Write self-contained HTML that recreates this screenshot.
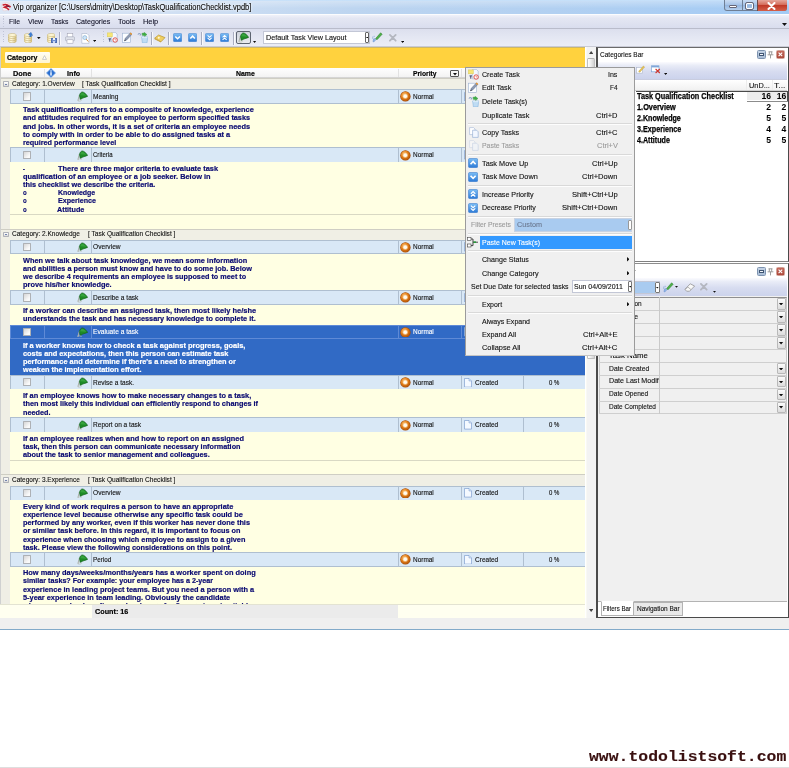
<!DOCTYPE html>
<html><head><meta charset="utf-8"><title>Vip organizer</title>
<style>
html,body{margin:0;padding:0;background:#fff;}
body{width:789px;height:768px;overflow:hidden;font-family:"Liberation Sans",sans-serif;}
#root{transform:translateZ(0);will-change:transform;position:relative;width:789px;height:768px;overflow:hidden;background:#fff;}
#root div,#root span.t,#root svg{position:absolute;box-sizing:border-box;}
span.t{white-space:pre;transform-origin:0 50%;}

</style></head><body>
<div id="root">
<div style="left:0px;top:0px;width:789px;height:13.5px;background:linear-gradient(90deg,#dbe6f5 0%,#cfdff3 25%,#bdd5f0 45%,#b2d0f1 70%,#a3cbf5 100%);"></div>
<div style="left:0px;top:0px;width:789px;height:1.4px;background:#a9d1f7;opacity:.85;"></div>
<div style="left:0px;top:0px;width:789px;height:13.5px;background:linear-gradient(180deg,rgba(255,255,255,.35),rgba(255,255,255,0) 60%);"></div>
<svg style="left:.6px;top:2px" width="10" height="9.6" viewBox="0 0 10 9.6"><path d="M.6 2.6 C2.4 .4 5.6 .2 8.4 1.6 L9.4 4.6 C8.6 7.6 5 9.4 2 8.6 Z" fill="#f7f2f4" stroke="#e3c9cf" stroke-width=".5"/><path d="M2.2 3 C4 2.2 6.4 2.6 8.6 4.4 C6.4 4.2 4.6 4.4 3.4 5.2 C5 5.6 6.6 6.2 7.6 7.4" fill="none" stroke="#c8202e" stroke-width="1.5" stroke-linecap="round"/><path d="M5 3.6 L8.8 5" stroke="#3a2a55" stroke-width=".8"/></svg>
<span class="t" id="t0" style="left:13.00px;top:2.00px;font-size:7.8px;font-weight:normal;color:#0a0a0a;line-height:10px;transform:scaleX(0.9008);-webkit-text-stroke:.12px #0a0a0a;font-size:8.3px;text-shadow:0 0 2px #fff,0 0 3px #fff;">Vip organizer [C:\Users\dmitry\Desktop\TaskQualificationChecklist.vpdb]</span>
<div style="left:724px;top:0px;width:63px;height:10.8px;border:1px solid #6f7f95;border-top:none;border-radius:0 0 3px 3px;background:linear-gradient(180deg,#c9dcf3,#a9c5e8 45%,#93b5df 50%,#b5d0ee);"></div>
<div style="left:757px;top:0px;width:29.6px;height:10.8px;border-radius:0 0 3px 0;background:linear-gradient(180deg,#e5a79c,#d46a58 45%,#c03a28 50%,#d4604a);border-left:1px solid #6f4a4a;"></div>
<div style="left:741.5px;top:0px;width:1px;height:10.3px;background:#6f7f95;"></div>
<div style="left:729px;top:5.3px;width:7.5px;height:2.5px;background:#fff;border:.5px solid #667;border-radius:1px;"></div>
<div style="left:746px;top:2.6px;width:6.5px;height:6px;border:1.3px solid #fff;outline:.5px solid #667;border-radius:1px;"></div>
<svg style="left:767px;top:1.5px" width="9" height="8" viewBox="0 0 9 8"><path d="M1.5 1 L7.5 7 M7.5 1 L1.5 7" stroke="#fff" stroke-width="2" stroke-linecap="round"/></svg>
<div style="left:0px;top:13.5px;width:789px;height:15px;background:linear-gradient(180deg,#f4f5fb 0%,#e4e7f3 30%,#d9ddee 100%);border-bottom:1px solid #b9bccb;"></div>
<div style="left:0px;top:13.5px;width:789px;height:1px;background:#fbfcfe;"></div>
<span class="t" id="t1" style="left:9.40px;top:16.70px;font-size:7.8px;font-weight:normal;color:#15152a;line-height:10px;transform:scaleX(0.8456);-webkit-text-stroke:.12px #15152a;font-size:8px;">File</span>
<span class="t" id="t2" style="left:27.90px;top:16.70px;font-size:7.8px;font-weight:normal;color:#15152a;line-height:10px;transform:scaleX(0.8836);-webkit-text-stroke:.12px #15152a;font-size:8px;">View</span>
<span class="t" id="t3" style="left:50.70px;top:16.70px;font-size:7.8px;font-weight:normal;color:#15152a;line-height:10px;transform:scaleX(0.8458);-webkit-text-stroke:.12px #15152a;font-size:8px;">Tasks</span>
<span class="t" id="t4" style="left:76.00px;top:16.70px;font-size:7.8px;font-weight:normal;color:#15152a;line-height:10px;transform:scaleX(0.8866);-webkit-text-stroke:.12px #15152a;font-size:8px;">Categories</span>
<span class="t" id="t5" style="left:117.90px;top:16.70px;font-size:7.8px;font-weight:normal;color:#15152a;line-height:10px;transform:scaleX(0.9204);-webkit-text-stroke:.12px #15152a;font-size:8px;">Tools</span>
<span class="t" id="t6" style="left:143.20px;top:16.70px;font-size:7.8px;font-weight:normal;color:#15152a;line-height:10px;transform:scaleX(0.9238);-webkit-text-stroke:.12px #15152a;font-size:8px;">Help</span>
<svg style="left:781.5px;top:22.5px" width="5" height="3" viewBox="0 0 5 3"><path d="M0 0H5L2.5 3Z" fill="#111"/></svg>
<div style="left:0px;top:28.5px;width:789px;height:18.5px;background:linear-gradient(180deg,#dcdfee 0%,#e3e6f2 40%,#eceef7 100%);"></div>
<div style="left:0px;top:46px;width:789px;height:1px;background:#c9cbd6;"></div>
<div style="left:3px;top:31px;width:1.2px;height:13px;background:repeating-linear-gradient(180deg,#bfc3d6 0 1px,transparent 1px 2.5px);"></div>
<div style="left:102.5px;top:31px;width:1.2px;height:13px;background:repeating-linear-gradient(180deg,#bfc3d6 0 1px,transparent 1px 2.5px);"></div>
<div style="left:3px;top:15.5px;width:1.2px;height:11px;background:repeating-linear-gradient(180deg,#c3c7d9 0 1px,transparent 1px 2.5px);"></div>
<svg style="left:8px;top:32.6px" width="8.6" height="10.2" viewBox="0 0 8.6 10.2"><defs><linearGradient id="cg80" x1="0" y1="0" x2="1" y2="0"><stop offset="0" stop-color="#f1dd98"/><stop offset=".35" stop-color="#fffbe2"/><stop offset="1" stop-color="#d8c27c"/></linearGradient></defs><path d="M.4 2 V8.2 A3.9 1.6 0 0 0 8.2 8.2 V2Z" fill="url(#cg80)" stroke="#bfa96c" stroke-width=".5"/><path d="M.4 4.1 A3.9 1.5 0 0 0 8.2 4.1 M.4 6.2 A3.9 1.5 0 0 0 8.2 6.2" fill="none" stroke="#c2ad70" stroke-width=".55"/><ellipse cx="4.3" cy="2" rx="3.9" ry="1.55" fill="#fdf6d4" stroke="#bfa96c" stroke-width=".5"/></svg>
<svg style="left:23.8px;top:32.6px" width="8.6" height="10.2" viewBox="0 0 8.6 10.2"><defs><linearGradient id="cg238" x1="0" y1="0" x2="1" y2="0"><stop offset="0" stop-color="#f1dd98"/><stop offset=".35" stop-color="#fffbe2"/><stop offset="1" stop-color="#d8c27c"/></linearGradient></defs><path d="M.4 2 V8.2 A3.9 1.6 0 0 0 8.2 8.2 V2Z" fill="url(#cg238)" stroke="#bfa96c" stroke-width=".5"/><path d="M.4 4.1 A3.9 1.5 0 0 0 8.2 4.1 M.4 6.2 A3.9 1.5 0 0 0 8.2 6.2" fill="none" stroke="#c2ad70" stroke-width=".55"/><ellipse cx="4.3" cy="2" rx="3.9" ry="1.55" fill="#fdf6d4" stroke="#bfa96c" stroke-width=".5"/></svg>
<svg style="left:28px;top:31.6px" width="5" height="5.4" viewBox="0 0 5 5.4"><path d="M.4 2.6 L3 .2 L4.8 3.6 L3.5 3.3 L3.2 5.2 L1.6 4.8 L1.9 2.9Z" fill="#3f7fd6" stroke="#2c5fae" stroke-width=".3"/></svg>
<svg style="left:37.4px;top:36.5px" width="3.6" height="2.2" viewBox="0 0 4 2.4"><path d="M0 0H4L2 2.4Z" fill="#111"/></svg>
<svg style="left:46.5px;top:32.6px" width="8.6" height="10.2" viewBox="0 0 8.6 10.2"><defs><linearGradient id="cg465" x1="0" y1="0" x2="1" y2="0"><stop offset="0" stop-color="#f1dd98"/><stop offset=".35" stop-color="#fffbe2"/><stop offset="1" stop-color="#d8c27c"/></linearGradient></defs><path d="M.4 2 V8.2 A3.9 1.6 0 0 0 8.2 8.2 V2Z" fill="url(#cg465)" stroke="#bfa96c" stroke-width=".5"/><path d="M.4 4.1 A3.9 1.5 0 0 0 8.2 4.1 M.4 6.2 A3.9 1.5 0 0 0 8.2 6.2" fill="none" stroke="#c2ad70" stroke-width=".55"/><ellipse cx="4.3" cy="2" rx="3.9" ry="1.55" fill="#fdf6d4" stroke="#bfa96c" stroke-width=".5"/></svg>
<div style="left:51.4px;top:37.6px;width:5.2px;height:5.2px;background:#7090d2;border:.5px solid #4f6db0;"></div>
<div style="left:52.5px;top:38px;width:2.9px;height:2.1px;background:#eef3fb;"></div>
<div style="left:52.6px;top:41px;width:2.6px;height:1.6px;background:#c9d6ef;"></div>
<div style="left:59.3px;top:31.5px;width:1px;height:13px;background:#a9adc0;"></div>
<div style="left:60.3px;top:31.5px;width:1px;height:13px;background:#f8f9fc;"></div>
<svg style="left:64.5px;top:32.5px" width="10" height="11" viewBox="0 0 10 11"><rect x="2.2" y=".6" width="5.6" height="3.5" fill="#fff" stroke="#99a" stroke-width=".5"/><rect x=".5" y="3.8" width="9" height="4" rx=".8" fill="#dfe2ea" stroke="#a2a7b8" stroke-width=".55"/><rect x="2" y="6.8" width="6" height="3.4" fill="#fff" stroke="#99a" stroke-width=".5"/></svg>
<svg style="left:80.5px;top:32.5px" width="9" height="11" viewBox="0 0 9 11"><path d="M.8 .5 H6 L8 2.5 V10.3 H.8Z" fill="#fff" stroke="#a9b3c9" stroke-width=".6"/><circle cx="3.8" cy="4.6" r="2" fill="#cfe6f7" stroke="#7aa6cf" stroke-width=".6"/><path d="M5.2 6.2 L7.4 8.6" stroke="#d08a3a" stroke-width="1"/></svg>
<svg style="left:93px;top:40.3px" width="3.2" height="2" viewBox="0 0 4 2.4"><path d="M0 0H4L2 2.4Z" fill="#111"/></svg>
<svg style="left:106.8px;top:32.4px" width="11" height="11" viewBox="0 0 11 11"><path d="M4.4 .4 H8.4 L10.2 2.2 V9.8 H4.4Z" fill="#f3f8ff" stroke="#9db1d0" stroke-width=".6"/><rect x=".4" y=".9" width="4.9" height="3.9" fill="#f7e676" stroke="#dccb58" stroke-width=".5"/><path d="M1.5 6.9 H4 M2.75 6.9 V9.7" stroke="#2a3a66" stroke-width=".9"/><circle cx="8.1" cy="8" r="2.2" fill="#fff" stroke="#d9443c" stroke-width=".9"/><path d="M8.1 6.9 V8 H9" stroke="#d9443c" stroke-width=".5" fill="none"/></svg>
<svg style="left:121.6px;top:32.2px" width="10.6" height="11" viewBox="0 0 10.6 11"><rect x=".5" y="1.2" width="8" height="9.2" fill="#fbfdff" stroke="#9db1d0" stroke-width=".6"/><path d="M2.4 9 L3.4 6.2 L8.4 .9 L9.9 2.3 L4.9 7.8Z" fill="#8e9cb5" stroke="#4a5670" stroke-width=".45"/><path d="M8.2 1.1 L9.7 2.5" stroke="#ea962c" stroke-width="1.6"/><path d="M2.4 9 L3 7.4 L3.9 8.3Z" fill="#333"/></svg>
<svg style="left:136.6px;top:32px" width="11.4" height="11.4" viewBox="0 0 11.4 11.4"><path d="M4.6 4.9 H10.8 L10 10.9 H5.4Z" fill="#bfdcf4" stroke="#86b3dc" stroke-width=".55"/><path d="M5 5.6 H10.4" stroke="#e9f4fd" stroke-width=".8"/><path d="M.6 2.8 C1 1 2.6 .6 3.6 1.8 L4.4 1.2 L4.2 3.4 L2.2 3.2 L3 2.5 C2.4 1.8 1.6 2 1.3 3Z" fill="#8fa4c6"/><path d="M5 1.2 L7.4 1 L7.2 .2 L10 2.6 L7.6 4.6 L7.6 3.4 L5.4 3.6Z" fill="#3fae45" stroke="#2a8a32" stroke-width=".3"/></svg>
<div style="left:150.6px;top:31.5px;width:1px;height:13px;background:#a9adc0;"></div>
<div style="left:151.6px;top:31.5px;width:1px;height:13px;background:#f8f9fc;"></div>
<svg style="left:154.2px;top:34px" width="11.5" height="9" viewBox="0 0 11.5 9"><path d="M.6 4.2 L4.6 1 L11 3.6 L7 7.8Z" fill="#f0cf62" stroke="#b89430" stroke-width=".7"/><path d="M.6 4.2 L7 7.8 V8.6 L.6 5.2Z" fill="#c9a23c"/><circle cx="4.8" cy="3.8" r="1" fill="#fff7d6"/></svg>
<div style="left:168.4px;top:31.5px;width:1px;height:13px;background:#a9adc0;"></div>
<div style="left:169.4px;top:31.5px;width:1px;height:13px;background:#f8f9fc;"></div>
<svg style="left:173.1px;top:33px" width="9.2" height="9.2" viewBox="0 0 9.2 9.2"><defs><linearGradient id="bgd1731" x1="0" y1="0" x2="0" y2="1"><stop offset="0" stop-color="#7cbef5"/><stop offset="1" stop-color="#2a78d6"/></linearGradient></defs><rect x=".4" y=".4" width="8.4" height="8.4" rx="1.3" fill="url(#bgd1731)" stroke="#4a86d0" stroke-width=".6"/><path d="M2.3 3.4 L4.6 5.8 L6.9 3.4" fill="none" stroke="#fff" stroke-width="1.5"/></svg>
<svg style="left:187.6px;top:33px" width="9.2" height="9.2" viewBox="0 0 9.2 9.2"><defs><linearGradient id="bgu1876" x1="0" y1="0" x2="0" y2="1"><stop offset="0" stop-color="#7cbef5"/><stop offset="1" stop-color="#2a78d6"/></linearGradient></defs><rect x=".4" y=".4" width="8.4" height="8.4" rx="1.3" fill="url(#bgu1876)" stroke="#4a86d0" stroke-width=".6"/><path d="M2.3 5.6 L4.6 3.2 L6.9 5.6" fill="none" stroke="#fff" stroke-width="1.5"/></svg>
<div style="left:200.8px;top:31.5px;width:1px;height:13px;background:#a9adc0;"></div>
<div style="left:201.8px;top:31.5px;width:1px;height:13px;background:#f8f9fc;"></div>
<svg style="left:205.3px;top:33px" width="9.2" height="9.2" viewBox="0 0 9.2 9.2"><defs><linearGradient id="bgdd2053" x1="0" y1="0" x2="0" y2="1"><stop offset="0" stop-color="#7cbef5"/><stop offset="1" stop-color="#2a78d6"/></linearGradient></defs><rect x=".4" y=".4" width="8.4" height="8.4" rx="1.3" fill="url(#bgdd2053)" stroke="#4a86d0" stroke-width=".6"/><path d="M2.6 2.4 L4.6 4.3 L6.6 2.4 M2.6 4.9 L4.6 6.8 L6.6 4.9" fill="none" stroke="#fff" stroke-width="1.1"/></svg>
<svg style="left:219.8px;top:33px" width="9.2" height="9.2" viewBox="0 0 9.2 9.2"><defs><linearGradient id="bguu2198" x1="0" y1="0" x2="0" y2="1"><stop offset="0" stop-color="#7cbef5"/><stop offset="1" stop-color="#2a78d6"/></linearGradient></defs><rect x=".4" y=".4" width="8.4" height="8.4" rx="1.3" fill="url(#bguu2198)" stroke="#4a86d0" stroke-width=".6"/><path d="M2.6 4.3 L4.6 2.4 L6.6 4.3 M2.6 6.8 L4.6 4.9 L6.6 6.8" fill="none" stroke="#fff" stroke-width="1.1"/></svg>
<div style="left:232.5px;top:31.5px;width:1px;height:13px;background:#a9adc0;"></div>
<div style="left:233.5px;top:31.5px;width:1px;height:13px;background:#f8f9fc;"></div>
<div style="left:235.6px;top:30.6px;width:15.2px;height:13.2px;border:1px solid #5d6470;border-radius:2px;background:linear-gradient(180deg,#cfd3dc,#e9ebf1);"></div>
<svg style="left:238px;top:32.2px" width="11" height="10.5" viewBox="0 0 11 10.5"><path d="M2.6 4 C1.6 6 1 8 1.6 9.6" stroke="#a9b0a9" stroke-width="1" fill="none"/><ellipse cx="2.4" cy="9.2" rx="2" ry="1" fill="none" stroke="#b9c0b9" stroke-width=".7"/><path d="M2.4 4.4 C3 2.2 4 1 5.4 .9 C7.4 1.2 9.4 3.2 10.7 5.4 C9 6.2 7 6.4 5.6 7.2 C4.6 7.8 3.8 8.2 3.2 8.2Z" fill="#1e8a26" stroke="#125c1a" stroke-width=".55"/><path d="M3.2 4.2 C3.8 2.6 4.6 1.8 5.6 1.8 C7 2.2 8.2 3.4 9.2 4.8 C7 4.4 5 4.2 3.2 4.2Z" fill="#46b44c" opacity=".6"/></svg>
<svg style="left:252.8px;top:40.6px" width="3.2" height="2" viewBox="0 0 4 2.4"><path d="M0 0H4L2 2.4Z" fill="#111"/></svg>
<div style="left:262.5px;top:30.6px;width:107px;height:13.2px;background:#fff;border:1px solid #c3c7d6;"></div>
<span class="t" id="t7" style="left:266.00px;top:32.80px;font-size:7.9px;font-weight:normal;color:#111;line-height:10px;transform:scaleX(0.9127);-webkit-text-stroke:.12px #111;">Default Task View Layout</span>
<div style="left:364.8px;top:31.6px;width:4.6px;height:11.2px;border:.7px solid #666;border-radius:1px;background:#fff;"></div>
<svg style="left:365.7px;top:36.6px" width="2.8" height="1.8" viewBox="0 0 4 2.4"><path d="M0 0H4L2 2.4Z" fill="#111"/></svg>
<svg style="left:371.8px;top:32px" width="11" height="11" viewBox="0 0 11 11"><path d="M1 10 C1 7 2 6.2 3.2 6.8 C4.2 7.4 3.6 9.4 1 10Z" fill="#8fb4e6" stroke="#5a86c8" stroke-width=".4"/><path d="M3.6 6.6 L8.6 .8 L10.2 2.2 L5 7.8Z" fill="#4fb04a" stroke="#2d7f2d" stroke-width=".5"/><path d="M.8 4.5 V7 M2.2 3.8 V5" stroke="#5a86c8" stroke-width=".5"/></svg>
<svg style="left:388.2px;top:32.6px" width="9.6" height="9.6" viewBox="0 0 10 10"><path d="M2 2 L8 8 M8 2 L2 8" stroke="#b4b7c0" stroke-width="1.9" stroke-linecap="round"/></svg>
<svg style="left:401.2px;top:40.6px" width="3.2" height="2" viewBox="0 0 4 2.4"><path d="M0 0H4L2 2.4Z" fill="#111"/></svg>
<div style="left:0px;top:47px;width:2px;height:583px;background:#cfd0d0;"></div>
<div style="left:1.2px;top:47px;width:584.1px;height:20.6px;background:#ffd23e;"></div>
<div style="left:1.2px;top:47px;width:584.1px;height:0.9px;background:#cdb766;"></div>
<div style="left:5px;top:52.2px;width:44.8px;height:10.9px;background:linear-gradient(180deg,#fffef6,#fff5d0);border-radius:1px;"></div>
<span class="t" id="t8" style="left:6.60px;top:53.30px;font-size:8px;font-weight:bold;color:#000;line-height:10px;transform:scaleX(0.8764);-webkit-text-stroke:.2px #000;">Category</span>
<svg style="left:41.6px;top:54.8px" width="5" height="5" viewBox="0 0 5 5"><path d="M2.5 .6 L4.5 4.4 H.5Z" fill="#fff" stroke="#b9b9b9" stroke-width=".7"/></svg>
<div style="left:1.2px;top:67.6px;width:584.1px;height:10.5px;background:linear-gradient(180deg,#fff,#f3f3f3);border-bottom:1px solid #d5d5d5;"></div>
<div style="left:43.7px;top:68.5px;width:1px;height:8.5px;background:#e2e2e2;"></div>
<div style="left:90.6px;top:68.5px;width:1px;height:8.5px;background:#e2e2e2;"></div>
<div style="left:398px;top:68.5px;width:1px;height:8.5px;background:#e2e2e2;"></div>
<div style="left:460.5px;top:68.5px;width:1px;height:8.5px;background:#e2e2e2;"></div>
<span class="t" id="t9" style="left:13.00px;top:68.70px;font-size:8px;font-weight:bold;color:#000;line-height:10px;transform:scaleX(0.9200);-webkit-text-stroke:.2px #000;">Done</span>
<svg style="left:45.6px;top:68px" width="10" height="10" viewBox="0 0 10 10"><path d="M5 .4 L9.6 5 L5 9.6 L.4 5Z" fill="#2b6fd0" stroke="#8fb7ea" stroke-width=".7"/><circle cx="5" cy="3" r=".8" fill="#fff"/><rect x="4.3" y="4.2" width="1.4" height="3.4" fill="#fff"/></svg>
<span class="t" id="t10" style="left:66.80px;top:68.70px;font-size:8px;font-weight:bold;color:#000;line-height:10px;transform:scaleX(0.8997);-webkit-text-stroke:.2px #000;">Info</span>
<span class="t" id="t11" style="left:235.70px;top:68.70px;font-size:8px;font-weight:bold;color:#000;line-height:10px;transform:scaleX(0.8625);-webkit-text-stroke:.2px #000;">Name</span>
<span class="t" id="t12" style="left:413.00px;top:68.70px;font-size:8px;font-weight:bold;color:#000;line-height:10px;transform:scaleX(0.8388);-webkit-text-stroke:.2px #000;">Priority</span>
<div style="left:450px;top:70px;width:9.2px;height:7px;border:1px solid #555;background:#f7f7f7;border-radius:1px;"></div>
<svg style="left:452.6px;top:73.2px" width="4" height="2.4" viewBox="0 0 4 2.4"><path d="M0 0H4L2 2.4Z" fill="#111"/></svg>
<div style="left:1.2px;top:78.1px;width:584.1px;height:11.5px;background:#f0efe5;border-top:1px solid #cfcec4;"></div>
<div style="left:3.2px;top:81.1px;width:5.5px;height:5.5px;border:.7px solid #b0b2b8;background:linear-gradient(180deg,#fff,#dcdcdc);border-radius:.8px;"></div>
<div style="left:4.7px;top:83.5px;width:2.5px;height:0.8px;background:#7383ad;"></div>
<span class="t" id="t13" style="left:12.00px;top:78.60px;font-size:7.2px;font-weight:normal;color:#111;line-height:10px;transform:scaleX(0.8164);-webkit-text-stroke:.12px #111;font-size:8px;">Category: 1.Overview</span>
<span class="t" id="t14" style="left:81.70px;top:78.60px;font-size:7.2px;font-weight:normal;color:#111;line-height:10px;transform:scaleX(0.8349);-webkit-text-stroke:.12px #111;font-size:8px;">[ Task Qualification Checklist ]</span>
<div style="left:1.2px;top:88.9px;width:9.4px;height:139.8px;background:#efeee5;border-right:1px solid #dcdbcf;"></div>
<div style="left:10.1px;top:88.9px;width:575.2px;height:15.5px;background:#d9e8f6;border-top:1px solid #afbfd0;border-bottom:1px solid #afbfd0;border-left:1px solid #afbfd0;"></div>
<div style="left:44.2px;top:89.9px;width:1px;height:13.5px;background:#afbfd0;"></div>
<div style="left:91px;top:89.9px;width:1px;height:13.5px;background:#afbfd0;"></div>
<div style="left:398px;top:89.9px;width:1px;height:13.5px;background:#afbfd0;"></div>
<div style="left:460.5px;top:89.9px;width:1px;height:13.5px;background:#afbfd0;"></div>
<div style="left:522.8px;top:89.9px;width:1px;height:13.5px;background:#afbfd0;"></div>
<div style="left:22.6px;top:92.45px;width:8.2px;height:8.4px;border:1px solid #aeb1b5;background:linear-gradient(135deg,#d6d6d6,#fafafa 75%);border-radius:.5px;"></div>
<svg style="left:77px;top:91.45px" width="11" height="10.5" viewBox="0 0 11 10.5"><path d="M2.6 4 C1.6 6 1 8 1.6 9.6" stroke="#a9b0a9" stroke-width="1" fill="none"/><ellipse cx="2.4" cy="9.2" rx="2" ry="1" fill="none" stroke="#b9c0b9" stroke-width=".7"/><path d="M2.4 4.4 C3 2.2 4 1 5.4 .9 C7.4 1.2 9.4 3.2 10.7 5.4 C9 6.2 7 6.4 5.6 7.2 C4.6 7.8 3.8 8.2 3.2 8.2Z" fill="#1e8a26" stroke="#125c1a" stroke-width=".55"/><path d="M3.2 4.2 C3.8 2.6 4.6 1.8 5.6 1.8 C7 2.2 8.2 3.4 9.2 4.8 C7 4.4 5 4.2 3.2 4.2Z" fill="#46b44c" opacity=".6"/></svg>
<span class="t" id="t15" style="left:93.30px;top:91.85px;font-size:7.2px;font-weight:normal;color:#111;line-height:10px;transform:scaleX(0.9174);-webkit-text-stroke:.12px #111;">Meaning</span>
<svg style="left:400.2px;top:91.35000000000001px" width="10.8" height="10.8" viewBox="0 0 10.8 10.8"><defs><radialGradient id="o913" cx=".38" cy=".32" r=".75"><stop offset="0" stop-color="#fbbd6c"/><stop offset=".55" stop-color="#e07a16"/><stop offset="1" stop-color="#b4560a"/></radialGradient></defs><circle cx="5.4" cy="5.4" r="5.2" fill="#a54e0a"/><circle cx="5.4" cy="5.4" r="4.6" fill="url(#o913)"/><circle cx="5.3" cy="5.3" r="2.5" fill="#fbd9a8" opacity=".8"/><circle cx="5.3" cy="5.3" r="1.7" fill="#fffaf0"/></svg>
<span class="t" id="t16" style="left:413.00px;top:91.85px;font-size:7.2px;font-weight:normal;color:#111;line-height:10px;transform:scaleX(0.8976);-webkit-text-stroke:.12px #111;">Normal</span>
<svg style="left:464.2px;top:91.85000000000001px" width="8" height="9.6" viewBox="0 0 8 9.6"><path d="M.5 .5 H5 L7.5 3 V9.1 H.5Z" fill="#f4f9ff" stroke="#7f9fcf" stroke-width=".7"/><path d="M5 .5 V3 H7.5" fill="#cfe0f5" stroke="#7f9fcf" stroke-width=".5"/></svg>
<span class="t" id="t17" style="left:475.30px;top:91.85px;font-size:7.2px;font-weight:normal;color:#111;line-height:10px;transform:scaleX(0.9070);-webkit-text-stroke:.12px #111;">Created</span>
<span class="t" id="t18" style="left:549.00px;top:91.85px;font-size:7.2px;font-weight:normal;color:#111;line-height:10px;transform:scaleX(0.9055);-webkit-text-stroke:.12px #111;font-size:6.6px;">0 %</span>
<div style="left:10.1px;top:104px;width:575.2px;height:44.1px;background:#ffffe3;overflow:hidden;"></div>
<span class="t" id="t19" style="left:22.80px;top:105.30px;font-size:7.5px;font-weight:bold;color:#0c0c72;line-height:10px;transform:scaleX(0.9859);-webkit-text-stroke:.2px #0c0c72;">Task qualification refers to a composite of knowledge, experience</span>
<span class="t" id="t20" style="left:22.80px;top:113.43px;font-size:7.5px;font-weight:bold;color:#0c0c72;line-height:10px;transform:scaleX(0.9709);-webkit-text-stroke:.2px #0c0c72;">and attitudes required for an employee to perform specified tasks</span>
<span class="t" id="t21" style="left:22.80px;top:121.56px;font-size:7.5px;font-weight:bold;color:#0c0c72;line-height:10px;transform:scaleX(0.9849);-webkit-text-stroke:.2px #0c0c72;">and jobs. In other words, it is a set of criteria an employee needs</span>
<span class="t" id="t22" style="left:22.80px;top:129.69px;font-size:7.5px;font-weight:bold;color:#0c0c72;line-height:10px;transform:scaleX(0.9826);-webkit-text-stroke:.2px #0c0c72;">to comply with in order to be able to do assigned tasks at a</span>
<span class="t" id="t23" style="left:22.80px;top:137.82px;font-size:7.5px;font-weight:bold;color:#0c0c72;line-height:10px;transform:scaleX(0.9678);-webkit-text-stroke:.2px #0c0c72;">required performance level</span>
<div style="left:10.1px;top:147.4px;width:575.2px;height:15.4px;background:#d9e8f6;border-top:1px solid #afbfd0;border-bottom:1px solid #afbfd0;border-left:1px solid #afbfd0;"></div>
<div style="left:44.2px;top:148.4px;width:1px;height:13.4px;background:#afbfd0;"></div>
<div style="left:91px;top:148.4px;width:1px;height:13.4px;background:#afbfd0;"></div>
<div style="left:398px;top:148.4px;width:1px;height:13.4px;background:#afbfd0;"></div>
<div style="left:460.5px;top:148.4px;width:1px;height:13.4px;background:#afbfd0;"></div>
<div style="left:522.8px;top:148.4px;width:1px;height:13.4px;background:#afbfd0;"></div>
<div style="left:22.6px;top:150.9px;width:8.2px;height:8.4px;border:1px solid #aeb1b5;background:linear-gradient(135deg,#d6d6d6,#fafafa 75%);border-radius:.5px;"></div>
<svg style="left:77px;top:149.90000000000003px" width="11" height="10.5" viewBox="0 0 11 10.5"><path d="M2.6 4 C1.6 6 1 8 1.6 9.6" stroke="#a9b0a9" stroke-width="1" fill="none"/><ellipse cx="2.4" cy="9.2" rx="2" ry="1" fill="none" stroke="#b9c0b9" stroke-width=".7"/><path d="M2.4 4.4 C3 2.2 4 1 5.4 .9 C7.4 1.2 9.4 3.2 10.7 5.4 C9 6.2 7 6.4 5.6 7.2 C4.6 7.8 3.8 8.2 3.2 8.2Z" fill="#1e8a26" stroke="#125c1a" stroke-width=".55"/><path d="M3.2 4.2 C3.8 2.6 4.6 1.8 5.6 1.8 C7 2.2 8.2 3.4 9.2 4.8 C7 4.4 5 4.2 3.2 4.2Z" fill="#46b44c" opacity=".6"/></svg>
<span class="t" id="t24" style="left:93.30px;top:150.30px;font-size:7.2px;font-weight:normal;color:#111;line-height:10px;transform:scaleX(0.8415);-webkit-text-stroke:.12px #111;">Criteria</span>
<svg style="left:400.2px;top:149.8px" width="10.8" height="10.8" viewBox="0 0 10.8 10.8"><defs><radialGradient id="o1498" cx=".38" cy=".32" r=".75"><stop offset="0" stop-color="#fbbd6c"/><stop offset=".55" stop-color="#e07a16"/><stop offset="1" stop-color="#b4560a"/></radialGradient></defs><circle cx="5.4" cy="5.4" r="5.2" fill="#a54e0a"/><circle cx="5.4" cy="5.4" r="4.6" fill="url(#o1498)"/><circle cx="5.3" cy="5.3" r="2.5" fill="#fbd9a8" opacity=".8"/><circle cx="5.3" cy="5.3" r="1.7" fill="#fffaf0"/></svg>
<span class="t" id="t25" style="left:413.00px;top:150.30px;font-size:7.2px;font-weight:normal;color:#111;line-height:10px;transform:scaleX(0.8976);-webkit-text-stroke:.12px #111;">Normal</span>
<svg style="left:464.2px;top:150.3px" width="8" height="9.6" viewBox="0 0 8 9.6"><path d="M.5 .5 H5 L7.5 3 V9.1 H.5Z" fill="#f4f9ff" stroke="#7f9fcf" stroke-width=".7"/><path d="M5 .5 V3 H7.5" fill="#cfe0f5" stroke="#7f9fcf" stroke-width=".5"/></svg>
<span class="t" id="t26" style="left:475.30px;top:150.30px;font-size:7.2px;font-weight:normal;color:#111;line-height:10px;transform:scaleX(0.9070);-webkit-text-stroke:.12px #111;">Created</span>
<span class="t" id="t27" style="left:549.00px;top:150.30px;font-size:7.2px;font-weight:normal;color:#111;line-height:10px;transform:scaleX(0.9055);-webkit-text-stroke:.12px #111;font-size:6.6px;">0 %</span>
<div style="left:10.1px;top:162.4px;width:575.2px;height:52.3px;background:#ffffe3;overflow:hidden;"></div>
<span class="t" id="t28" style="left:22.80px;top:163.90px;font-size:7.5px;font-weight:bold;color:#0c0c72;line-height:10px;transform:scaleX(0.7200);-webkit-text-stroke:.2px #0c0c72;">-</span>
<span class="t" id="t29" style="left:57.80px;top:163.90px;font-size:7.5px;font-weight:bold;color:#0c0c72;line-height:10px;transform:scaleX(0.9872);-webkit-text-stroke:.2px #0c0c72;">There are three major criteria to evaluate task</span>
<span class="t" id="t30" style="left:22.80px;top:172.03px;font-size:7.5px;font-weight:bold;color:#0c0c72;line-height:10px;transform:scaleX(0.9844);-webkit-text-stroke:.2px #0c0c72;">qualification of an employee or a job seeker. Below in</span>
<span class="t" id="t31" style="left:22.80px;top:180.16px;font-size:7.5px;font-weight:bold;color:#0c0c72;line-height:10px;transform:scaleX(0.9795);-webkit-text-stroke:.2px #0c0c72;">this checklist we describe the criteria.</span>
<span class="t" id="t32" style="left:22.80px;top:188.29px;font-size:7.5px;font-weight:bold;color:#0c0c72;line-height:10px;transform:scaleX(0.8054);-webkit-text-stroke:.2px #0c0c72;">o</span>
<span class="t" id="t33" style="left:57.80px;top:188.29px;font-size:7.5px;font-weight:bold;color:#0c0c72;line-height:10px;transform:scaleX(0.9296);-webkit-text-stroke:.2px #0c0c72;">Knowledge</span>
<span class="t" id="t34" style="left:22.80px;top:196.42px;font-size:7.5px;font-weight:bold;color:#0c0c72;line-height:10px;transform:scaleX(0.8054);-webkit-text-stroke:.2px #0c0c72;">o</span>
<span class="t" id="t35" style="left:57.80px;top:196.42px;font-size:7.5px;font-weight:bold;color:#0c0c72;line-height:10px;transform:scaleX(0.9493);-webkit-text-stroke:.2px #0c0c72;">Experience</span>
<span class="t" id="t36" style="left:22.80px;top:204.55px;font-size:7.5px;font-weight:bold;color:#0c0c72;line-height:10px;transform:scaleX(0.8054);-webkit-text-stroke:.2px #0c0c72;">o</span>
<span class="t" id="t37" style="left:57.00px;top:204.55px;font-size:7.5px;font-weight:bold;color:#0c0c72;line-height:10px;transform:scaleX(0.9672);-webkit-text-stroke:.2px #0c0c72;">Attitude</span>
<div style="left:10.1px;top:214px;width:575.2px;height:14.7px;background:#ffffe3;border-top:1px solid #d9d9c4;"></div>
<div style="left:1.2px;top:228.7px;width:584.1px;height:11.6px;background:#f0efe5;border-top:1px solid #cfcec4;"></div>
<div style="left:3.2px;top:231.75px;width:5.5px;height:5.5px;border:.7px solid #b0b2b8;background:linear-gradient(180deg,#fff,#dcdcdc);border-radius:.8px;"></div>
<div style="left:4.7px;top:234.15px;width:2.5px;height:0.8px;background:#7383ad;"></div>
<span class="t" id="t38" style="left:12.00px;top:229.25px;font-size:7.2px;font-weight:normal;color:#111;line-height:10px;transform:scaleX(0.8152);-webkit-text-stroke:.12px #111;font-size:8px;">Category: 2.Knowledge</span>
<span class="t" id="t39" style="left:87.50px;top:229.25px;font-size:7.2px;font-weight:normal;color:#111;line-height:10px;transform:scaleX(0.8236);-webkit-text-stroke:.12px #111;font-size:8px;">[ Task Qualification Checklist ]</span>
<div style="left:1.2px;top:239.6px;width:9.4px;height:234.3px;background:#efeee5;border-right:1px solid #dcdbcf;"></div>
<div style="left:10.1px;top:239.6px;width:575.2px;height:14.9px;background:#d9e8f6;border-top:1px solid #afbfd0;border-bottom:1px solid #afbfd0;border-left:1px solid #afbfd0;"></div>
<div style="left:44.2px;top:240.6px;width:1px;height:12.9px;background:#afbfd0;"></div>
<div style="left:91px;top:240.6px;width:1px;height:12.9px;background:#afbfd0;"></div>
<div style="left:398px;top:240.6px;width:1px;height:12.9px;background:#afbfd0;"></div>
<div style="left:460.5px;top:240.6px;width:1px;height:12.9px;background:#afbfd0;"></div>
<div style="left:522.8px;top:240.6px;width:1px;height:12.9px;background:#afbfd0;"></div>
<div style="left:22.6px;top:242.85px;width:8.2px;height:8.4px;border:1px solid #aeb1b5;background:linear-gradient(135deg,#d6d6d6,#fafafa 75%);border-radius:.5px;"></div>
<svg style="left:77px;top:241.85000000000002px" width="11" height="10.5" viewBox="0 0 11 10.5"><path d="M2.6 4 C1.6 6 1 8 1.6 9.6" stroke="#a9b0a9" stroke-width="1" fill="none"/><ellipse cx="2.4" cy="9.2" rx="2" ry="1" fill="none" stroke="#b9c0b9" stroke-width=".7"/><path d="M2.4 4.4 C3 2.2 4 1 5.4 .9 C7.4 1.2 9.4 3.2 10.7 5.4 C9 6.2 7 6.4 5.6 7.2 C4.6 7.8 3.8 8.2 3.2 8.2Z" fill="#1e8a26" stroke="#125c1a" stroke-width=".55"/><path d="M3.2 4.2 C3.8 2.6 4.6 1.8 5.6 1.8 C7 2.2 8.2 3.4 9.2 4.8 C7 4.4 5 4.2 3.2 4.2Z" fill="#46b44c" opacity=".6"/></svg>
<span class="t" id="t40" style="left:93.30px;top:242.25px;font-size:7.2px;font-weight:normal;color:#111;line-height:10px;transform:scaleX(0.9210);-webkit-text-stroke:.12px #111;">Overview</span>
<svg style="left:400.2px;top:241.75px" width="10.8" height="10.8" viewBox="0 0 10.8 10.8"><defs><radialGradient id="o2417" cx=".38" cy=".32" r=".75"><stop offset="0" stop-color="#fbbd6c"/><stop offset=".55" stop-color="#e07a16"/><stop offset="1" stop-color="#b4560a"/></radialGradient></defs><circle cx="5.4" cy="5.4" r="5.2" fill="#a54e0a"/><circle cx="5.4" cy="5.4" r="4.6" fill="url(#o2417)"/><circle cx="5.3" cy="5.3" r="2.5" fill="#fbd9a8" opacity=".8"/><circle cx="5.3" cy="5.3" r="1.7" fill="#fffaf0"/></svg>
<span class="t" id="t41" style="left:413.00px;top:242.25px;font-size:7.2px;font-weight:normal;color:#111;line-height:10px;transform:scaleX(0.8976);-webkit-text-stroke:.12px #111;">Normal</span>
<svg style="left:464.2px;top:242.25px" width="8" height="9.6" viewBox="0 0 8 9.6"><path d="M.5 .5 H5 L7.5 3 V9.1 H.5Z" fill="#f4f9ff" stroke="#7f9fcf" stroke-width=".7"/><path d="M5 .5 V3 H7.5" fill="#cfe0f5" stroke="#7f9fcf" stroke-width=".5"/></svg>
<span class="t" id="t42" style="left:475.30px;top:242.25px;font-size:7.2px;font-weight:normal;color:#111;line-height:10px;transform:scaleX(0.9070);-webkit-text-stroke:.12px #111;">Created</span>
<span class="t" id="t43" style="left:549.00px;top:242.25px;font-size:7.2px;font-weight:normal;color:#111;line-height:10px;transform:scaleX(0.9055);-webkit-text-stroke:.12px #111;font-size:6.6px;">0 %</span>
<div style="left:10.1px;top:254.1px;width:575.2px;height:36.9px;background:#ffffe3;overflow:hidden;"></div>
<span class="t" id="t44" style="left:22.80px;top:255.60px;font-size:7.5px;font-weight:bold;color:#0c0c72;line-height:10px;transform:scaleX(0.9803);-webkit-text-stroke:.2px #0c0c72;">When we talk about task knowledge, we mean some information</span>
<span class="t" id="t45" style="left:22.80px;top:263.73px;font-size:7.5px;font-weight:bold;color:#0c0c72;line-height:10px;transform:scaleX(0.9773);-webkit-text-stroke:.2px #0c0c72;">and abilities a person must know and have to do some job. Below</span>
<span class="t" id="t46" style="left:22.80px;top:271.86px;font-size:7.5px;font-weight:bold;color:#0c0c72;line-height:10px;transform:scaleX(0.9701);-webkit-text-stroke:.2px #0c0c72;">we describe 4 requirements an employee is supposed to meet to</span>
<span class="t" id="t47" style="left:22.80px;top:279.99px;font-size:7.5px;font-weight:bold;color:#0c0c72;line-height:10px;transform:scaleX(0.9841);-webkit-text-stroke:.2px #0c0c72;">prove his/her knowledge.</span>
<div style="left:10.1px;top:290.3px;width:575.2px;height:14.6px;background:#d9e8f6;border-top:1px solid #afbfd0;border-bottom:1px solid #afbfd0;border-left:1px solid #afbfd0;"></div>
<div style="left:44.2px;top:291.3px;width:1px;height:12.6px;background:#afbfd0;"></div>
<div style="left:91px;top:291.3px;width:1px;height:12.6px;background:#afbfd0;"></div>
<div style="left:398px;top:291.3px;width:1px;height:12.6px;background:#afbfd0;"></div>
<div style="left:460.5px;top:291.3px;width:1px;height:12.6px;background:#afbfd0;"></div>
<div style="left:522.8px;top:291.3px;width:1px;height:12.6px;background:#afbfd0;"></div>
<div style="left:22.6px;top:293.4px;width:8.2px;height:8.4px;border:1px solid #aeb1b5;background:linear-gradient(135deg,#d6d6d6,#fafafa 75%);border-radius:.5px;"></div>
<svg style="left:77px;top:292.40000000000003px" width="11" height="10.5" viewBox="0 0 11 10.5"><path d="M2.6 4 C1.6 6 1 8 1.6 9.6" stroke="#a9b0a9" stroke-width="1" fill="none"/><ellipse cx="2.4" cy="9.2" rx="2" ry="1" fill="none" stroke="#b9c0b9" stroke-width=".7"/><path d="M2.4 4.4 C3 2.2 4 1 5.4 .9 C7.4 1.2 9.4 3.2 10.7 5.4 C9 6.2 7 6.4 5.6 7.2 C4.6 7.8 3.8 8.2 3.2 8.2Z" fill="#1e8a26" stroke="#125c1a" stroke-width=".55"/><path d="M3.2 4.2 C3.8 2.6 4.6 1.8 5.6 1.8 C7 2.2 8.2 3.4 9.2 4.8 C7 4.4 5 4.2 3.2 4.2Z" fill="#46b44c" opacity=".6"/></svg>
<span class="t" id="t48" style="left:93.30px;top:292.80px;font-size:7.2px;font-weight:normal;color:#111;line-height:10px;transform:scaleX(0.9163);-webkit-text-stroke:.12px #111;">Describe a task</span>
<svg style="left:400.2px;top:292.3px" width="10.8" height="10.8" viewBox="0 0 10.8 10.8"><defs><radialGradient id="o2923" cx=".38" cy=".32" r=".75"><stop offset="0" stop-color="#fbbd6c"/><stop offset=".55" stop-color="#e07a16"/><stop offset="1" stop-color="#b4560a"/></radialGradient></defs><circle cx="5.4" cy="5.4" r="5.2" fill="#a54e0a"/><circle cx="5.4" cy="5.4" r="4.6" fill="url(#o2923)"/><circle cx="5.3" cy="5.3" r="2.5" fill="#fbd9a8" opacity=".8"/><circle cx="5.3" cy="5.3" r="1.7" fill="#fffaf0"/></svg>
<span class="t" id="t49" style="left:413.00px;top:292.80px;font-size:7.2px;font-weight:normal;color:#111;line-height:10px;transform:scaleX(0.8976);-webkit-text-stroke:.12px #111;">Normal</span>
<svg style="left:464.2px;top:292.8px" width="8" height="9.6" viewBox="0 0 8 9.6"><path d="M.5 .5 H5 L7.5 3 V9.1 H.5Z" fill="#f4f9ff" stroke="#7f9fcf" stroke-width=".7"/><path d="M5 .5 V3 H7.5" fill="#cfe0f5" stroke="#7f9fcf" stroke-width=".5"/></svg>
<span class="t" id="t50" style="left:475.30px;top:292.80px;font-size:7.2px;font-weight:normal;color:#111;line-height:10px;transform:scaleX(0.9070);-webkit-text-stroke:.12px #111;">Created</span>
<span class="t" id="t51" style="left:549.00px;top:292.80px;font-size:7.2px;font-weight:normal;color:#111;line-height:10px;transform:scaleX(0.9055);-webkit-text-stroke:.12px #111;font-size:6.6px;">0 %</span>
<div style="left:10.1px;top:304.5px;width:575.2px;height:20.8px;background:#ffffe3;overflow:hidden;"></div>
<span class="t" id="t52" style="left:22.80px;top:306.30px;font-size:7.5px;font-weight:bold;color:#0c0c72;line-height:10px;transform:scaleX(0.9932);-webkit-text-stroke:.2px #0c0c72;">If a worker can describe an assigned task, then most likely he/she</span>
<span class="t" id="t53" style="left:22.80px;top:314.43px;font-size:7.5px;font-weight:bold;color:#0c0c72;line-height:10px;transform:scaleX(0.9761);-webkit-text-stroke:.2px #0c0c72;">understands the task and has necessary knowledge to complete it.</span>
<div style="left:10.1px;top:324.6px;width:575.2px;height:14.7px;background:#316ac5;border-top:1px solid #5f8ad6;border-bottom:1px solid #5f8ad6;border-left:1px solid #5f8ad6;"></div>
<div style="left:44.2px;top:325.6px;width:1px;height:12.7px;background:#5f8ad6;"></div>
<div style="left:91px;top:325.6px;width:1px;height:12.7px;background:#5f8ad6;"></div>
<div style="left:398px;top:325.6px;width:1px;height:12.7px;background:#5f8ad6;"></div>
<div style="left:460.5px;top:325.6px;width:1px;height:12.7px;background:#5f8ad6;"></div>
<div style="left:522.8px;top:325.6px;width:1px;height:12.7px;background:#5f8ad6;"></div>
<div style="left:22.6px;top:327.75px;width:8.2px;height:8.4px;border:1px solid #aeb1b5;background:linear-gradient(135deg,#d6d6d6,#fafafa 75%);border-radius:.5px;"></div>
<svg style="left:77px;top:326.75000000000006px" width="11" height="10.5" viewBox="0 0 11 10.5"><path d="M2.6 4 C1.6 6 1 8 1.6 9.6" stroke="#a9b0a9" stroke-width="1" fill="none"/><ellipse cx="2.4" cy="9.2" rx="2" ry="1" fill="none" stroke="#b9c0b9" stroke-width=".7"/><path d="M2.4 4.4 C3 2.2 4 1 5.4 .9 C7.4 1.2 9.4 3.2 10.7 5.4 C9 6.2 7 6.4 5.6 7.2 C4.6 7.8 3.8 8.2 3.2 8.2Z" fill="#1e8a26" stroke="#125c1a" stroke-width=".55"/><path d="M3.2 4.2 C3.8 2.6 4.6 1.8 5.6 1.8 C7 2.2 8.2 3.4 9.2 4.8 C7 4.4 5 4.2 3.2 4.2Z" fill="#46b44c" opacity=".6"/></svg>
<span class="t" id="t54" style="left:93.30px;top:327.15px;font-size:7.2px;font-weight:normal;color:#fff;line-height:10px;transform:scaleX(0.9236);-webkit-text-stroke:.12px #fff;">Evaluate a task</span>
<svg style="left:400.2px;top:326.65000000000003px" width="10.8" height="10.8" viewBox="0 0 10.8 10.8"><defs><radialGradient id="o3266" cx=".38" cy=".32" r=".75"><stop offset="0" stop-color="#fbbd6c"/><stop offset=".55" stop-color="#e07a16"/><stop offset="1" stop-color="#b4560a"/></radialGradient></defs><circle cx="5.4" cy="5.4" r="5.2" fill="#a54e0a"/><circle cx="5.4" cy="5.4" r="4.6" fill="url(#o3266)"/><circle cx="5.3" cy="5.3" r="2.5" fill="#fbd9a8" opacity=".8"/><circle cx="5.3" cy="5.3" r="1.7" fill="#fffaf0"/></svg>
<span class="t" id="t55" style="left:413.00px;top:327.15px;font-size:7.2px;font-weight:normal;color:#fff;line-height:10px;transform:scaleX(0.8976);-webkit-text-stroke:.12px #fff;">Normal</span>
<svg style="left:464.2px;top:327.15000000000003px" width="8" height="9.6" viewBox="0 0 8 9.6"><path d="M.5 .5 H5 L7.5 3 V9.1 H.5Z" fill="#f4f9ff" stroke="#7f9fcf" stroke-width=".7"/><path d="M5 .5 V3 H7.5" fill="#cfe0f5" stroke="#7f9fcf" stroke-width=".5"/></svg>
<span class="t" id="t56" style="left:475.30px;top:327.15px;font-size:7.2px;font-weight:normal;color:#fff;line-height:10px;transform:scaleX(0.9070);-webkit-text-stroke:.12px #fff;">Created</span>
<span class="t" id="t57" style="left:549.00px;top:327.15px;font-size:7.2px;font-weight:normal;color:#fff;line-height:10px;transform:scaleX(0.9055);-webkit-text-stroke:.12px #fff;font-size:6.6px;">0 %</span>
<div style="left:10.1px;top:338.9px;width:575.2px;height:36.6px;background:#316ac5;overflow:hidden;"></div>
<span class="t" id="t58" style="left:22.80px;top:340.90px;font-size:7.5px;font-weight:bold;color:#fff;line-height:10px;transform:scaleX(0.9918);-webkit-text-stroke:.2px #fff;">If a worker knows how to check a task against progress, goals,</span>
<span class="t" id="t59" style="left:22.80px;top:349.03px;font-size:7.5px;font-weight:bold;color:#fff;line-height:10px;transform:scaleX(0.9773);-webkit-text-stroke:.2px #fff;">costs and expectations, then this person can estimate task</span>
<span class="t" id="t60" style="left:22.80px;top:357.16px;font-size:7.5px;font-weight:bold;color:#fff;line-height:10px;transform:scaleX(0.9800);-webkit-text-stroke:.2px #fff;">performance and determine if there&#x27;s a need to strengthen or</span>
<span class="t" id="t61" style="left:22.80px;top:365.29px;font-size:7.5px;font-weight:bold;color:#fff;line-height:10px;transform:scaleX(0.9779);-webkit-text-stroke:.2px #fff;">weaken the implementation effort.</span>
<div style="left:10.1px;top:374.8px;width:575.2px;height:15px;background:#d9e8f6;border-top:1px solid #afbfd0;border-bottom:1px solid #afbfd0;border-left:1px solid #afbfd0;"></div>
<div style="left:44.2px;top:375.8px;width:1px;height:13px;background:#afbfd0;"></div>
<div style="left:91px;top:375.8px;width:1px;height:13px;background:#afbfd0;"></div>
<div style="left:398px;top:375.8px;width:1px;height:13px;background:#afbfd0;"></div>
<div style="left:460.5px;top:375.8px;width:1px;height:13px;background:#afbfd0;"></div>
<div style="left:522.8px;top:375.8px;width:1px;height:13px;background:#afbfd0;"></div>
<div style="left:22.6px;top:378.1px;width:8.2px;height:8.4px;border:1px solid #aeb1b5;background:linear-gradient(135deg,#d6d6d6,#fafafa 75%);border-radius:.5px;"></div>
<svg style="left:77px;top:377.1px" width="11" height="10.5" viewBox="0 0 11 10.5"><path d="M2.6 4 C1.6 6 1 8 1.6 9.6" stroke="#a9b0a9" stroke-width="1" fill="none"/><ellipse cx="2.4" cy="9.2" rx="2" ry="1" fill="none" stroke="#b9c0b9" stroke-width=".7"/><path d="M2.4 4.4 C3 2.2 4 1 5.4 .9 C7.4 1.2 9.4 3.2 10.7 5.4 C9 6.2 7 6.4 5.6 7.2 C4.6 7.8 3.8 8.2 3.2 8.2Z" fill="#1e8a26" stroke="#125c1a" stroke-width=".55"/><path d="M3.2 4.2 C3.8 2.6 4.6 1.8 5.6 1.8 C7 2.2 8.2 3.4 9.2 4.8 C7 4.4 5 4.2 3.2 4.2Z" fill="#46b44c" opacity=".6"/></svg>
<span class="t" id="t62" style="left:93.30px;top:377.50px;font-size:7.2px;font-weight:normal;color:#111;line-height:10px;transform:scaleX(0.9083);-webkit-text-stroke:.12px #111;">Revise a task.</span>
<svg style="left:400.2px;top:377.0px" width="10.8" height="10.8" viewBox="0 0 10.8 10.8"><defs><radialGradient id="o3770" cx=".38" cy=".32" r=".75"><stop offset="0" stop-color="#fbbd6c"/><stop offset=".55" stop-color="#e07a16"/><stop offset="1" stop-color="#b4560a"/></radialGradient></defs><circle cx="5.4" cy="5.4" r="5.2" fill="#a54e0a"/><circle cx="5.4" cy="5.4" r="4.6" fill="url(#o3770)"/><circle cx="5.3" cy="5.3" r="2.5" fill="#fbd9a8" opacity=".8"/><circle cx="5.3" cy="5.3" r="1.7" fill="#fffaf0"/></svg>
<span class="t" id="t63" style="left:413.00px;top:377.50px;font-size:7.2px;font-weight:normal;color:#111;line-height:10px;transform:scaleX(0.8976);-webkit-text-stroke:.12px #111;">Normal</span>
<svg style="left:464.2px;top:377.5px" width="8" height="9.6" viewBox="0 0 8 9.6"><path d="M.5 .5 H5 L7.5 3 V9.1 H.5Z" fill="#f4f9ff" stroke="#7f9fcf" stroke-width=".7"/><path d="M5 .5 V3 H7.5" fill="#cfe0f5" stroke="#7f9fcf" stroke-width=".5"/></svg>
<span class="t" id="t64" style="left:475.30px;top:377.50px;font-size:7.2px;font-weight:normal;color:#111;line-height:10px;transform:scaleX(0.9070);-webkit-text-stroke:.12px #111;">Created</span>
<span class="t" id="t65" style="left:549.00px;top:377.50px;font-size:7.2px;font-weight:normal;color:#111;line-height:10px;transform:scaleX(0.9055);-webkit-text-stroke:.12px #111;font-size:6.6px;">0 %</span>
<div style="left:10.1px;top:389.4px;width:575.2px;height:28.7px;background:#ffffe3;overflow:hidden;"></div>
<span class="t" id="t66" style="left:22.80px;top:391.30px;font-size:7.5px;font-weight:bold;color:#0c0c72;line-height:10px;transform:scaleX(0.9882);-webkit-text-stroke:.2px #0c0c72;">If an employee knows how to make necessary changes to a task,</span>
<span class="t" id="t67" style="left:22.80px;top:399.43px;font-size:7.5px;font-weight:bold;color:#0c0c72;line-height:10px;transform:scaleX(0.9739);-webkit-text-stroke:.2px #0c0c72;">then most likely this individual can efficiently respond to changes if</span>
<span class="t" id="t68" style="left:22.80px;top:407.56px;font-size:7.5px;font-weight:bold;color:#0c0c72;line-height:10px;transform:scaleX(0.9667);-webkit-text-stroke:.2px #0c0c72;">needed.</span>
<div style="left:10.1px;top:417.4px;width:575.2px;height:15.4px;background:#d9e8f6;border-top:1px solid #afbfd0;border-bottom:1px solid #afbfd0;border-left:1px solid #afbfd0;"></div>
<div style="left:44.2px;top:418.4px;width:1px;height:13.4px;background:#afbfd0;"></div>
<div style="left:91px;top:418.4px;width:1px;height:13.4px;background:#afbfd0;"></div>
<div style="left:398px;top:418.4px;width:1px;height:13.4px;background:#afbfd0;"></div>
<div style="left:460.5px;top:418.4px;width:1px;height:13.4px;background:#afbfd0;"></div>
<div style="left:522.8px;top:418.4px;width:1px;height:13.4px;background:#afbfd0;"></div>
<div style="left:22.6px;top:420.9px;width:8.2px;height:8.4px;border:1px solid #aeb1b5;background:linear-gradient(135deg,#d6d6d6,#fafafa 75%);border-radius:.5px;"></div>
<svg style="left:77px;top:419.90000000000003px" width="11" height="10.5" viewBox="0 0 11 10.5"><path d="M2.6 4 C1.6 6 1 8 1.6 9.6" stroke="#a9b0a9" stroke-width="1" fill="none"/><ellipse cx="2.4" cy="9.2" rx="2" ry="1" fill="none" stroke="#b9c0b9" stroke-width=".7"/><path d="M2.4 4.4 C3 2.2 4 1 5.4 .9 C7.4 1.2 9.4 3.2 10.7 5.4 C9 6.2 7 6.4 5.6 7.2 C4.6 7.8 3.8 8.2 3.2 8.2Z" fill="#1e8a26" stroke="#125c1a" stroke-width=".55"/><path d="M3.2 4.2 C3.8 2.6 4.6 1.8 5.6 1.8 C7 2.2 8.2 3.4 9.2 4.8 C7 4.4 5 4.2 3.2 4.2Z" fill="#46b44c" opacity=".6"/></svg>
<span class="t" id="t69" style="left:93.30px;top:420.30px;font-size:7.2px;font-weight:normal;color:#111;line-height:10px;transform:scaleX(0.9118);-webkit-text-stroke:.12px #111;">Report on a task</span>
<svg style="left:400.2px;top:419.8px" width="10.8" height="10.8" viewBox="0 0 10.8 10.8"><defs><radialGradient id="o4198" cx=".38" cy=".32" r=".75"><stop offset="0" stop-color="#fbbd6c"/><stop offset=".55" stop-color="#e07a16"/><stop offset="1" stop-color="#b4560a"/></radialGradient></defs><circle cx="5.4" cy="5.4" r="5.2" fill="#a54e0a"/><circle cx="5.4" cy="5.4" r="4.6" fill="url(#o4198)"/><circle cx="5.3" cy="5.3" r="2.5" fill="#fbd9a8" opacity=".8"/><circle cx="5.3" cy="5.3" r="1.7" fill="#fffaf0"/></svg>
<span class="t" id="t70" style="left:413.00px;top:420.30px;font-size:7.2px;font-weight:normal;color:#111;line-height:10px;transform:scaleX(0.8976);-webkit-text-stroke:.12px #111;">Normal</span>
<svg style="left:464.2px;top:420.3px" width="8" height="9.6" viewBox="0 0 8 9.6"><path d="M.5 .5 H5 L7.5 3 V9.1 H.5Z" fill="#f4f9ff" stroke="#7f9fcf" stroke-width=".7"/><path d="M5 .5 V3 H7.5" fill="#cfe0f5" stroke="#7f9fcf" stroke-width=".5"/></svg>
<span class="t" id="t71" style="left:475.30px;top:420.30px;font-size:7.2px;font-weight:normal;color:#111;line-height:10px;transform:scaleX(0.9070);-webkit-text-stroke:.12px #111;">Created</span>
<span class="t" id="t72" style="left:549.00px;top:420.30px;font-size:7.2px;font-weight:normal;color:#111;line-height:10px;transform:scaleX(0.9055);-webkit-text-stroke:.12px #111;font-size:6.6px;">0 %</span>
<div style="left:10.1px;top:432.4px;width:575.2px;height:28.5px;background:#ffffe3;overflow:hidden;"></div>
<span class="t" id="t73" style="left:22.80px;top:433.90px;font-size:7.5px;font-weight:bold;color:#0c0c72;line-height:10px;transform:scaleX(0.9815);-webkit-text-stroke:.2px #0c0c72;">If an employee realizes when and how to report on an assigned</span>
<span class="t" id="t74" style="left:22.80px;top:442.03px;font-size:7.5px;font-weight:bold;color:#0c0c72;line-height:10px;transform:scaleX(0.9663);-webkit-text-stroke:.2px #0c0c72;">task, then this person can communicate necessary information</span>
<span class="t" id="t75" style="left:22.80px;top:450.16px;font-size:7.5px;font-weight:bold;color:#0c0c72;line-height:10px;transform:scaleX(0.9760);-webkit-text-stroke:.2px #0c0c72;">about the task to senior management and colleagues.</span>
<div style="left:10.1px;top:460.2px;width:575.2px;height:13.7px;background:#ffffe3;border-top:1px solid #d9d9c4;"></div>
<div style="left:1.2px;top:473.9px;width:584.1px;height:12.3px;background:#f0efe5;border-top:1px solid #cfcec4;"></div>
<div style="left:3.2px;top:477.3px;width:5.5px;height:5.5px;border:.7px solid #b0b2b8;background:linear-gradient(180deg,#fff,#dcdcdc);border-radius:.8px;"></div>
<div style="left:4.7px;top:479.7px;width:2.5px;height:0.8px;background:#7383ad;"></div>
<span class="t" id="t76" style="left:12.00px;top:474.80px;font-size:7.2px;font-weight:normal;color:#111;line-height:10px;transform:scaleX(0.8109);-webkit-text-stroke:.12px #111;font-size:8px;">Category: 3.Experience</span>
<span class="t" id="t77" style="left:87.50px;top:474.80px;font-size:7.2px;font-weight:normal;color:#111;line-height:10px;transform:scaleX(0.8236);-webkit-text-stroke:.12px #111;font-size:8px;">[ Task Qualification Checklist ]</span>
<div style="left:1.2px;top:485.5px;width:9.4px;height:118.5px;background:#efeee5;border-right:1px solid #dcdbcf;"></div>
<div style="left:10.1px;top:485.5px;width:575.2px;height:15px;background:#d9e8f6;border-top:1px solid #afbfd0;border-bottom:1px solid #afbfd0;border-left:1px solid #afbfd0;"></div>
<div style="left:44.2px;top:486.5px;width:1px;height:13px;background:#afbfd0;"></div>
<div style="left:91px;top:486.5px;width:1px;height:13px;background:#afbfd0;"></div>
<div style="left:398px;top:486.5px;width:1px;height:13px;background:#afbfd0;"></div>
<div style="left:460.5px;top:486.5px;width:1px;height:13px;background:#afbfd0;"></div>
<div style="left:522.8px;top:486.5px;width:1px;height:13px;background:#afbfd0;"></div>
<div style="left:22.6px;top:488.8px;width:8.2px;height:8.4px;border:1px solid #aeb1b5;background:linear-gradient(135deg,#d6d6d6,#fafafa 75%);border-radius:.5px;"></div>
<svg style="left:77px;top:487.8px" width="11" height="10.5" viewBox="0 0 11 10.5"><path d="M2.6 4 C1.6 6 1 8 1.6 9.6" stroke="#a9b0a9" stroke-width="1" fill="none"/><ellipse cx="2.4" cy="9.2" rx="2" ry="1" fill="none" stroke="#b9c0b9" stroke-width=".7"/><path d="M2.4 4.4 C3 2.2 4 1 5.4 .9 C7.4 1.2 9.4 3.2 10.7 5.4 C9 6.2 7 6.4 5.6 7.2 C4.6 7.8 3.8 8.2 3.2 8.2Z" fill="#1e8a26" stroke="#125c1a" stroke-width=".55"/><path d="M3.2 4.2 C3.8 2.6 4.6 1.8 5.6 1.8 C7 2.2 8.2 3.4 9.2 4.8 C7 4.4 5 4.2 3.2 4.2Z" fill="#46b44c" opacity=".6"/></svg>
<span class="t" id="t78" style="left:93.30px;top:488.20px;font-size:7.2px;font-weight:normal;color:#111;line-height:10px;transform:scaleX(0.9210);-webkit-text-stroke:.12px #111;">Overview</span>
<svg style="left:400.2px;top:487.7px" width="10.8" height="10.8" viewBox="0 0 10.8 10.8"><defs><radialGradient id="o4877" cx=".38" cy=".32" r=".75"><stop offset="0" stop-color="#fbbd6c"/><stop offset=".55" stop-color="#e07a16"/><stop offset="1" stop-color="#b4560a"/></radialGradient></defs><circle cx="5.4" cy="5.4" r="5.2" fill="#a54e0a"/><circle cx="5.4" cy="5.4" r="4.6" fill="url(#o4877)"/><circle cx="5.3" cy="5.3" r="2.5" fill="#fbd9a8" opacity=".8"/><circle cx="5.3" cy="5.3" r="1.7" fill="#fffaf0"/></svg>
<span class="t" id="t79" style="left:413.00px;top:488.20px;font-size:7.2px;font-weight:normal;color:#111;line-height:10px;transform:scaleX(0.8976);-webkit-text-stroke:.12px #111;">Normal</span>
<svg style="left:464.2px;top:488.2px" width="8" height="9.6" viewBox="0 0 8 9.6"><path d="M.5 .5 H5 L7.5 3 V9.1 H.5Z" fill="#f4f9ff" stroke="#7f9fcf" stroke-width=".7"/><path d="M5 .5 V3 H7.5" fill="#cfe0f5" stroke="#7f9fcf" stroke-width=".5"/></svg>
<span class="t" id="t80" style="left:475.30px;top:488.20px;font-size:7.2px;font-weight:normal;color:#111;line-height:10px;transform:scaleX(0.9070);-webkit-text-stroke:.12px #111;">Created</span>
<span class="t" id="t81" style="left:549.00px;top:488.20px;font-size:7.2px;font-weight:normal;color:#111;line-height:10px;transform:scaleX(0.9055);-webkit-text-stroke:.12px #111;font-size:6.6px;">0 %</span>
<div style="left:10.1px;top:500.1px;width:575.2px;height:52.6px;background:#ffffe3;overflow:hidden;"></div>
<span class="t" id="t82" style="left:22.80px;top:502.00px;font-size:7.5px;font-weight:bold;color:#0c0c72;line-height:10px;transform:scaleX(0.9816);-webkit-text-stroke:.2px #0c0c72;">Every kind of work requires a person to have an appropriate</span>
<span class="t" id="t83" style="left:22.80px;top:510.13px;font-size:7.5px;font-weight:bold;color:#0c0c72;line-height:10px;transform:scaleX(0.9893);-webkit-text-stroke:.2px #0c0c72;">experience level because otherwise any specific task could be</span>
<span class="t" id="t84" style="left:22.80px;top:518.26px;font-size:7.5px;font-weight:bold;color:#0c0c72;line-height:10px;transform:scaleX(0.9795);-webkit-text-stroke:.2px #0c0c72;">performed by any worker, even if this worker has never done this</span>
<span class="t" id="t85" style="left:22.80px;top:526.39px;font-size:7.5px;font-weight:bold;color:#0c0c72;line-height:10px;transform:scaleX(0.9719);-webkit-text-stroke:.2px #0c0c72;">or similar task before. In this regard, it is important to focus on</span>
<span class="t" id="t86" style="left:22.80px;top:534.52px;font-size:7.5px;font-weight:bold;color:#0c0c72;line-height:10px;transform:scaleX(0.9755);-webkit-text-stroke:.2px #0c0c72;">experience when choosing which employee to assign to a given</span>
<span class="t" id="t87" style="left:22.80px;top:542.65px;font-size:7.5px;font-weight:bold;color:#0c0c72;line-height:10px;transform:scaleX(0.9761);-webkit-text-stroke:.2px #0c0c72;">task. Please view the following considerations on this point.</span>
<div style="left:10.1px;top:552px;width:575.2px;height:15.2px;background:#d9e8f6;border-top:1px solid #afbfd0;border-bottom:1px solid #afbfd0;border-left:1px solid #afbfd0;"></div>
<div style="left:44.2px;top:553px;width:1px;height:13.2px;background:#afbfd0;"></div>
<div style="left:91px;top:553px;width:1px;height:13.2px;background:#afbfd0;"></div>
<div style="left:398px;top:553px;width:1px;height:13.2px;background:#afbfd0;"></div>
<div style="left:460.5px;top:553px;width:1px;height:13.2px;background:#afbfd0;"></div>
<div style="left:522.8px;top:553px;width:1px;height:13.2px;background:#afbfd0;"></div>
<div style="left:22.6px;top:555.4px;width:8.2px;height:8.4px;border:1px solid #aeb1b5;background:linear-gradient(135deg,#d6d6d6,#fafafa 75%);border-radius:.5px;"></div>
<svg style="left:77px;top:554.4px" width="11" height="10.5" viewBox="0 0 11 10.5"><path d="M2.6 4 C1.6 6 1 8 1.6 9.6" stroke="#a9b0a9" stroke-width="1" fill="none"/><ellipse cx="2.4" cy="9.2" rx="2" ry="1" fill="none" stroke="#b9c0b9" stroke-width=".7"/><path d="M2.4 4.4 C3 2.2 4 1 5.4 .9 C7.4 1.2 9.4 3.2 10.7 5.4 C9 6.2 7 6.4 5.6 7.2 C4.6 7.8 3.8 8.2 3.2 8.2Z" fill="#1e8a26" stroke="#125c1a" stroke-width=".55"/><path d="M3.2 4.2 C3.8 2.6 4.6 1.8 5.6 1.8 C7 2.2 8.2 3.4 9.2 4.8 C7 4.4 5 4.2 3.2 4.2Z" fill="#46b44c" opacity=".6"/></svg>
<span class="t" id="t88" style="left:93.30px;top:554.80px;font-size:7.2px;font-weight:normal;color:#111;line-height:10px;transform:scaleX(0.8758);-webkit-text-stroke:.12px #111;">Period</span>
<svg style="left:400.2px;top:554.3000000000001px" width="10.8" height="10.8" viewBox="0 0 10.8 10.8"><defs><radialGradient id="o5543" cx=".38" cy=".32" r=".75"><stop offset="0" stop-color="#fbbd6c"/><stop offset=".55" stop-color="#e07a16"/><stop offset="1" stop-color="#b4560a"/></radialGradient></defs><circle cx="5.4" cy="5.4" r="5.2" fill="#a54e0a"/><circle cx="5.4" cy="5.4" r="4.6" fill="url(#o5543)"/><circle cx="5.3" cy="5.3" r="2.5" fill="#fbd9a8" opacity=".8"/><circle cx="5.3" cy="5.3" r="1.7" fill="#fffaf0"/></svg>
<span class="t" id="t89" style="left:413.00px;top:554.80px;font-size:7.2px;font-weight:normal;color:#111;line-height:10px;transform:scaleX(0.8976);-webkit-text-stroke:.12px #111;">Normal</span>
<svg style="left:464.2px;top:554.8000000000001px" width="8" height="9.6" viewBox="0 0 8 9.6"><path d="M.5 .5 H5 L7.5 3 V9.1 H.5Z" fill="#f4f9ff" stroke="#7f9fcf" stroke-width=".7"/><path d="M5 .5 V3 H7.5" fill="#cfe0f5" stroke="#7f9fcf" stroke-width=".5"/></svg>
<span class="t" id="t90" style="left:475.30px;top:554.80px;font-size:7.2px;font-weight:normal;color:#111;line-height:10px;transform:scaleX(0.9070);-webkit-text-stroke:.12px #111;">Created</span>
<span class="t" id="t91" style="left:549.00px;top:554.80px;font-size:7.2px;font-weight:normal;color:#111;line-height:10px;transform:scaleX(0.9055);-webkit-text-stroke:.12px #111;font-size:6.6px;">0 %</span>
<div style="left:10.1px;top:566.8px;width:575.2px;height:37.9px;background:#ffffe3;overflow:hidden;"></div>
<span class="t" id="t92" style="left:22.80px;top:568.30px;font-size:7.5px;font-weight:bold;color:#0c0c72;line-height:10px;transform:scaleX(0.9864);-webkit-text-stroke:.2px #0c0c72;">How many days/weeks/months/years has a worker spent on doing</span>
<span class="t" id="t93" style="left:22.80px;top:576.43px;font-size:7.5px;font-weight:bold;color:#0c0c72;line-height:10px;transform:scaleX(0.9540);-webkit-text-stroke:.2px #0c0c72;">similar tasks? For example: your employee has a 2-year</span>
<span class="t" id="t94" style="left:22.80px;top:584.56px;font-size:7.5px;font-weight:bold;color:#0c0c72;line-height:10px;transform:scaleX(0.9818);-webkit-text-stroke:.2px #0c0c72;">experience in leading project teams. But you need a person with a</span>
<span class="t" id="t95" style="left:22.80px;top:592.69px;font-size:7.5px;font-weight:bold;color:#0c0c72;line-height:10px;transform:scaleX(0.9824);-webkit-text-stroke:.2px #0c0c72;">5-year experience in team leading. Obviously the candidate</span>
<span class="t" id="t96" style="left:22.80px;top:600.82px;font-size:7.5px;font-weight:bold;color:#0c0c72;line-height:10px;transform:scaleX(0.9767);-webkit-text-stroke:.2px #0c0c72;">who managed only software developers for 2 years is not suitable</span>
<div style="left:0px;top:603.6px;width:585.3px;height:14.6px;background:#fffff0;border-top:1px solid #e3e3d2;"></div>
<div style="left:92px;top:604.6px;width:305.6px;height:13px;background:#ebebeb;"></div>
<span class="t" id="t97" style="left:95.00px;top:607.00px;font-size:8px;font-weight:bold;color:#000;line-height:10px;transform:scaleX(0.9054);-webkit-text-stroke:.2px #000;">Count: 16</span>
<div style="left:585.5px;top:47px;width:10.7px;height:571px;background:#f3f3f3;border-left:1px solid #f9f9f3;"></div>
<svg style="left:588.6px;top:51.4px" width="4.4" height="3" viewBox="0 0 4.4 3"><path d="M0 3 L2.2 0 L4.4 3Z" fill="#444"/></svg>
<div style="left:586.5px;top:58.3px;width:8.5px;height:301.2px;background:linear-gradient(90deg,#fff,#f0f0f0 40%,#d2d2d2);border:.7px solid #c0c0c0;border-top:1px solid #b0b0b0;border-radius:1.5px;"></div>
<svg style="left:588.6px;top:608.6px" width="4.4" height="3" viewBox="0 0 4.4 3"><path d="M0 0 H4.4 L2.2 3Z" fill="#444"/></svg>
<div style="left:0px;top:618.2px;width:789px;height:11.3px;background:#efefef;"></div>
<div style="left:0px;top:629px;width:789px;height:1.4px;background:linear-gradient(180deg,#5a8db5,#a9c6dd);"></div>
<div style="left:0px;top:630.4px;width:789px;height:137.6px;background:#fff;"></div>
<div style="left:0px;top:766.8px;width:789px;height:1px;background:#dedede;"></div>
<span class="t" id="t98" style="left:589.30px;top:753.00px;font-size:7.2px;font-weight:normal;color:#3a1010;line-height:10px;transform:scaleX(1.1915);-webkit-text-stroke:.12px #3a1010;font-family:'Liberation Mono',monospace;font-size:13.8px;font-weight:bold;line-height:20px;margin-top:-5px;">www.todolistsoft.com</span>
<div style="left:596.2px;top:46.8px;width:192.8px;height:215.6px;background:#fff;border:2.1px solid #505050;border-top:1.3px solid #6a6a6a;border-right:1.5px solid #4a4a4a;border-bottom:1.4px solid #808080;"></div>
<span class="t" id="t99" style="left:600.00px;top:50.20px;font-size:7.8px;font-weight:normal;color:#111;line-height:10px;transform:scaleX(0.8363);-webkit-text-stroke:.12px #111;">Categories Bar</span>
<div style="left:756.9px;top:49.9px;width:8.9px;height:9px;border:1px solid #7d93b0;border-radius:1.5px;background:linear-gradient(180deg,#c3d2e4,#a9bdd6);"></div>
<div style="left:759px;top:52.6px;width:4.7px;height:3.4px;border:.8px solid #3f5573;border-top:1.3px solid #3f5573;background:#f4f7fb;"></div>
<svg style="left:767.4px;top:50.5px" width="7" height="8" viewBox="0 0 7 8"><path d="M1.5 .8 H5.5 M2.3 .8 V3.6 M4.7 .8 V3.6 M.6 3.8 H6.4 M3.5 3.8 V7.4" stroke="#858585" stroke-width=".8" fill="none"/></svg>
<div style="left:776.2px;top:49.9px;width:9.2px;height:9px;border:1px solid #d2a097;border-radius:1.5px;background:linear-gradient(180deg,#c4685a,#ad4a3c);"></div>
<svg style="left:778.4px;top:52.0px" width="4.8" height="4.8" viewBox="0 0 5 5"><path d="M.6 .6 L4.4 4.4 M4.4 .6 L.6 4.4" stroke="#fff" stroke-width="1.1"/></svg>
<div style="left:598.2px;top:61.5px;width:189.3px;height:18px;background:linear-gradient(180deg,#fbfbfe 0%,#e9ecf7 20%,#d7dcf0 55%,#ccd3ec 100%);border-bottom:.7px solid #aab0c8;"></div>
<svg style="left:636px;top:64.5px" width="9" height="9" viewBox="0 0 9 9"><rect x=".5" y="2.5" width="6" height="5.6" fill="#fff" stroke="#a9b3c9" stroke-width=".6"/><path d="M2.6 6.4 L7.4 1 L8.6 2 L3.8 7.2Z" fill="#e9c85a" stroke="#b08d2a" stroke-width=".4"/></svg>
<svg style="left:650.5px;top:65px" width="10" height="9" viewBox="0 0 10 9"><rect x=".5" y=".8" width="7.5" height="6" fill="#fff" stroke="#7fa6d8" stroke-width=".7"/><rect x=".5" y=".8" width="7.5" height="1.6" fill="#7fa6d8"/><path d="M4.6 4 L8.8 8 M8.8 4 L4.6 8" stroke="#d0342c" stroke-width="1.1"/></svg>
<svg style="left:663.6px;top:73.4px" width="3.2" height="2" viewBox="0 0 4 2.4"><path d="M0 0H4L2 2.4Z" fill="#111"/></svg>
<div style="left:598.2px;top:79.4px;width:189.3px;height:11.4px;background:linear-gradient(180deg,#fff,#f1f1f1);border-bottom:1px solid #d0d0d0;border-top:1px solid #c9cde0;"></div>
<div style="left:745.5px;top:80.4px;width:1px;height:9.6px;background:#ececec;"></div>
<div style="left:771.8px;top:80.4px;width:1px;height:9.6px;background:#ececec;"></div>
<span class="t" id="t100" style="left:748.70px;top:81.10px;font-size:7.8px;font-weight:normal;color:#111;line-height:10px;transform:scaleX(0.9408);-webkit-text-stroke:.12px #111;">UnD...</span>
<span class="t" id="t101" style="left:773.50px;top:81.10px;font-size:7.8px;font-weight:normal;color:#111;line-height:10px;transform:scaleX(1.1051);-webkit-text-stroke:.12px #111;">T...</span>
<div style="left:636px;top:91.2px;width:152px;height:10.4px;border-top:1px solid #4a4a4a;border-right:1px solid #4a4a4a;"></div>
<div style="left:747px;top:100.6px;width:41px;height:1px;background:#8c8c8c;"></div>
<div style="left:747px;top:92.3px;width:39.6px;height:8px;background:#ececec;"></div>
<span class="t" id="t102" style="left:637.20px;top:90.80px;font-size:8.6px;font-weight:bold;color:#000;line-height:10px;transform:scaleX(0.8492);-webkit-text-stroke:.25px #000;">Task Qualification Checklist</span>
<span class="t" id="t103" style="left:761.44px;top:90.80px;font-size:8.6px;font-weight:bold;color:#000;line-height:10px;">16</span>
<span class="t" id="t104" style="left:776.84px;top:90.80px;font-size:8.6px;font-weight:bold;color:#000;line-height:10px;">16</span>
<span class="t" id="t105" style="left:637.20px;top:101.90px;font-size:8.6px;font-weight:bold;color:#000;line-height:10px;transform:scaleX(0.8548);-webkit-text-stroke:.25px #000;">1.Overview</span>
<span class="t" id="t106" style="left:766.22px;top:101.90px;font-size:8.6px;font-weight:bold;color:#000;line-height:10px;">2</span>
<span class="t" id="t107" style="left:781.62px;top:101.90px;font-size:8.6px;font-weight:bold;color:#000;line-height:10px;">2</span>
<span class="t" id="t108" style="left:637.20px;top:113.00px;font-size:8.6px;font-weight:bold;color:#000;line-height:10px;transform:scaleX(0.8262);-webkit-text-stroke:.25px #000;">2.Knowledge</span>
<span class="t" id="t109" style="left:766.22px;top:113.00px;font-size:8.6px;font-weight:bold;color:#000;line-height:10px;">5</span>
<span class="t" id="t110" style="left:781.62px;top:113.00px;font-size:8.6px;font-weight:bold;color:#000;line-height:10px;">5</span>
<span class="t" id="t111" style="left:637.20px;top:124.10px;font-size:8.6px;font-weight:bold;color:#000;line-height:10px;transform:scaleX(0.8354);-webkit-text-stroke:.25px #000;">3.Experience</span>
<span class="t" id="t112" style="left:766.22px;top:124.10px;font-size:8.6px;font-weight:bold;color:#000;line-height:10px;">4</span>
<span class="t" id="t113" style="left:781.62px;top:124.10px;font-size:8.6px;font-weight:bold;color:#000;line-height:10px;">4</span>
<span class="t" id="t114" style="left:637.20px;top:135.20px;font-size:8.6px;font-weight:bold;color:#000;line-height:10px;transform:scaleX(0.8303);-webkit-text-stroke:.25px #000;">4.Attitude</span>
<span class="t" id="t115" style="left:766.22px;top:135.20px;font-size:8.6px;font-weight:bold;color:#000;line-height:10px;">5</span>
<span class="t" id="t116" style="left:781.62px;top:135.20px;font-size:8.6px;font-weight:bold;color:#000;line-height:10px;">5</span>
<div style="left:596.2px;top:262.8px;width:192.8px;height:355.4px;background:#fff;border:2.1px solid #4a4a4a;border-bottom-width:1.7px;border-right:1.5px solid #4a4a4a;border-top:1.2px solid #8d8d8d;"></div>
<span class="t" id="t117" style="left:600.00px;top:267.40px;font-size:7.8px;font-weight:normal;color:#111;line-height:10px;-webkit-text-stroke:.12px #111;">Filters Bar</span>
<div style="left:756.9px;top:267px;width:8.9px;height:9px;border:1px solid #7d93b0;border-radius:1.5px;background:linear-gradient(180deg,#c3d2e4,#a9bdd6);"></div>
<div style="left:759px;top:269.7px;width:4.7px;height:3.4px;border:.8px solid #3f5573;border-top:1.3px solid #3f5573;background:#f4f7fb;"></div>
<svg style="left:767.4px;top:267.6px" width="7" height="8" viewBox="0 0 7 8"><path d="M1.5 .8 H5.5 M2.3 .8 V3.6 M4.7 .8 V3.6 M.6 3.8 H6.4 M3.5 3.8 V7.4" stroke="#858585" stroke-width=".8" fill="none"/></svg>
<div style="left:776.2px;top:267px;width:9.2px;height:9px;border:1px solid #d2a097;border-radius:1.5px;background:linear-gradient(180deg,#c4685a,#ad4a3c);"></div>
<svg style="left:778.4px;top:269.1px" width="4.8" height="4.8" viewBox="0 0 5 5"><path d="M.6 .6 L4.4 4.4 M4.4 .6 L.6 4.4" stroke="#fff" stroke-width="1.1"/></svg>
<div style="left:598.2px;top:277.9px;width:189.3px;height:18.4px;background:linear-gradient(180deg,#fbfbfe 0%,#e9ecf7 20%,#d7dcf0 55%,#ccd3ec 100%);"></div>
<div style="left:601px;top:281.2px;width:59.2px;height:12.8px;background:#fff;border:1px solid #c3c7d6;"></div>
<div style="left:602px;top:282.2px;width:53px;height:10.8px;background:#a9cbf0;"></div>
<div style="left:655.4px;top:282.2px;width:4.2px;height:10.8px;border:.7px solid #777;border-radius:1px;background:#fff;"></div>
<svg style="left:656.2px;top:287px" width="2.6" height="1.7" viewBox="0 0 4 2.4"><path d="M0 0H4L2 2.4Z" fill="#111"/></svg>
<svg style="left:663px;top:281.8px" width="11" height="11" viewBox="0 0 11 11"><path d="M1 10 C1 7 2 6.2 3.2 6.8 C4.2 7.4 3.6 9.4 1 10Z" fill="#8fb4e6" stroke="#5a86c8" stroke-width=".4"/><path d="M3.6 6.6 L8.6 .8 L10.2 2.2 L5 7.8Z" fill="#4fb04a" stroke="#2d7f2d" stroke-width=".5"/><path d="M.8 4.5 V7 M2.2 3.8 V5" stroke="#5a86c8" stroke-width=".5"/></svg>
<svg style="left:675.4px;top:286.4px" width="3" height="1.9" viewBox="0 0 4 2.4"><path d="M0 0H4L2 2.4Z" fill="#111"/></svg>
<svg style="left:683.6px;top:282.6px" width="11.5" height="9" viewBox="0 0 11.5 9"><path d="M1 6.4 L6.2 .8 L10.6 3 L5.6 8.2 H2.6Z" fill="#f8f8f8" stroke="#8a8a8a" stroke-width=".7"/><path d="M1 6.4 L3.8 4 L7 6.6" fill="none" stroke="#8a8a8a" stroke-width=".6"/></svg>
<svg style="left:699.3px;top:282.4px" width="9.6" height="9.6" viewBox="0 0 10 10"><path d="M2 2 L8 8 M8 2 L2 8" stroke="#b4b7c0" stroke-width="1.9" stroke-linecap="round"/></svg>
<svg style="left:713.4px;top:291px" width="3" height="1.9" viewBox="0 0 4 2.4"><path d="M0 0H4L2 2.4Z" fill="#111"/></svg>
<div style="left:598.2px;top:296.2px;width:189.3px;height:305px;background:#f0f0f0;"></div>
<div style="left:599px;top:296.6px;width:188px;height:117px;background:#f0f0f0;border:1px solid #c9c9c9;border-top:1px solid #8f8f8f;"></div>
<div style="left:599px;top:309.7px;width:188px;height:1px;background:#cfcfcf;"></div>
<div style="left:600px;top:297.7px;width:59.4px;height:12px;overflow:hidden;"></div>
<div style="left:600px;top:297.2px;width:59.4px;height:13px;overflow:hidden;">
<span class="t" id="t118" style="left:8.80px;top:1.40px;font-size:7.8px;font-weight:normal;color:#111;line-height:10px;transform:scaleX(0.8292);-webkit-text-stroke:.12px #111;">Completion</span>
</div>
<div style="left:776.6px;top:297.8px;width:9.8px;height:11.8px;border:1px solid #b9b9b9;border-radius:1px;background:linear-gradient(180deg,#fbfbfb,#dcdcdc);"></div>
<svg style="left:779.4px;top:302.8px" width="4.2" height="2.5" viewBox="0 0 4 2.4"><path d="M0 0H4L2 2.4Z" fill="#111"/></svg>
<div style="left:599px;top:322.8px;width:188px;height:1px;background:#cfcfcf;"></div>
<div style="left:600px;top:310.7px;width:59.4px;height:12.1px;overflow:hidden;"></div>
<div style="left:600px;top:310.2px;width:59.4px;height:13.1px;overflow:hidden;">
<span class="t" id="t119" style="left:8.80px;top:1.45px;font-size:7.8px;font-weight:normal;color:#111;line-height:10px;transform:scaleX(0.8831);-webkit-text-stroke:.12px #111;">Due Date</span>
</div>
<div style="left:776.6px;top:310.8px;width:9.8px;height:11.9px;border:1px solid #b9b9b9;border-radius:1px;background:linear-gradient(180deg,#fbfbfb,#dcdcdc);"></div>
<svg style="left:779.4px;top:315.85px" width="4.2" height="2.5" viewBox="0 0 4 2.4"><path d="M0 0H4L2 2.4Z" fill="#111"/></svg>
<div style="left:599px;top:336.2px;width:188px;height:1px;background:#cfcfcf;"></div>
<div style="left:600px;top:323.8px;width:59.4px;height:12.4px;overflow:hidden;"></div>
<div style="left:600px;top:323.3px;width:59.4px;height:13.4px;overflow:hidden;">
<span class="t" id="t120" style="left:8.80px;top:1.60px;font-size:7.8px;font-weight:normal;color:#111;line-height:10px;-webkit-text-stroke:.12px #111;">Priority</span>
</div>
<div style="left:776.6px;top:323.9px;width:9.8px;height:12.2px;border:1px solid #b9b9b9;border-radius:1px;background:linear-gradient(180deg,#fbfbfb,#dcdcdc);"></div>
<svg style="left:779.4px;top:329.1px" width="4.2" height="2.5" viewBox="0 0 4 2.4"><path d="M0 0H4L2 2.4Z" fill="#111"/></svg>
<div style="left:599px;top:349.1px;width:188px;height:1px;background:#cfcfcf;"></div>
<div style="left:600px;top:337.2px;width:59.4px;height:11.9px;overflow:hidden;"></div>
<div style="left:600px;top:336.7px;width:59.4px;height:12.9px;overflow:hidden;">
<span class="t" id="t121" style="left:8.80px;top:1.35px;font-size:7.8px;font-weight:normal;color:#111;line-height:10px;-webkit-text-stroke:.12px #111;">Status</span>
</div>
<div style="left:776.6px;top:337.3px;width:9.8px;height:11.7px;border:1px solid #b9b9b9;border-radius:1px;background:linear-gradient(180deg,#fbfbfb,#dcdcdc);"></div>
<svg style="left:779.4px;top:342.25px" width="4.2" height="2.5" viewBox="0 0 4 2.4"><path d="M0 0H4L2 2.4Z" fill="#111"/></svg>
<div style="left:599px;top:361.8px;width:188px;height:1px;background:#cfcfcf;"></div>
<div style="left:600px;top:350.1px;width:59.4px;height:11.7px;overflow:hidden;"></div>
<div style="left:600px;top:349.6px;width:59.4px;height:12.7px;overflow:hidden;">
<span class="t" id="t122" style="left:8.80px;top:1.25px;font-size:7.8px;font-weight:normal;color:#111;line-height:10px;-webkit-text-stroke:.12px #111;">Task Name</span>
</div>
<div style="left:599px;top:374.5px;width:188px;height:1px;background:#cfcfcf;"></div>
<div style="left:600px;top:362.8px;width:59.4px;height:11.7px;overflow:hidden;"></div>
<div style="left:600px;top:362.3px;width:59.4px;height:12.7px;overflow:hidden;">
<span class="t" id="t123" style="left:8.80px;top:1.25px;font-size:7.8px;font-weight:normal;color:#111;line-height:10px;transform:scaleX(0.8668);-webkit-text-stroke:.12px #111;">Date Created</span>
</div>
<div style="left:776.6px;top:362.9px;width:9.8px;height:11.5px;border:1px solid #b9b9b9;border-radius:1px;background:linear-gradient(180deg,#fbfbfb,#dcdcdc);"></div>
<svg style="left:779.4px;top:367.75px" width="4.2" height="2.5" viewBox="0 0 4 2.4"><path d="M0 0H4L2 2.4Z" fill="#111"/></svg>
<div style="left:599px;top:387.5px;width:188px;height:1px;background:#cfcfcf;"></div>
<div style="left:600px;top:375.5px;width:59.4px;height:12px;overflow:hidden;"></div>
<div style="left:600px;top:375px;width:59.4px;height:13px;overflow:hidden;">
<span class="t" id="t124" style="left:8.80px;top:1.40px;font-size:7.8px;font-weight:normal;color:#111;line-height:10px;transform:scaleX(0.9106);-webkit-text-stroke:.12px #111;">Date Last Modified</span>
</div>
<div style="left:776.6px;top:375.6px;width:9.8px;height:11.8px;border:1px solid #b9b9b9;border-radius:1px;background:linear-gradient(180deg,#fbfbfb,#dcdcdc);"></div>
<svg style="left:779.4px;top:380.6px" width="4.2" height="2.5" viewBox="0 0 4 2.4"><path d="M0 0H4L2 2.4Z" fill="#111"/></svg>
<div style="left:599px;top:400.5px;width:188px;height:1px;background:#cfcfcf;"></div>
<div style="left:600px;top:388.5px;width:59.4px;height:12px;overflow:hidden;"></div>
<div style="left:600px;top:388px;width:59.4px;height:13px;overflow:hidden;">
<span class="t" id="t125" style="left:8.80px;top:1.40px;font-size:7.8px;font-weight:normal;color:#111;line-height:10px;transform:scaleX(0.8450);-webkit-text-stroke:.12px #111;">Date Opened</span>
</div>
<div style="left:776.6px;top:388.6px;width:9.8px;height:11.8px;border:1px solid #b9b9b9;border-radius:1px;background:linear-gradient(180deg,#fbfbfb,#dcdcdc);"></div>
<svg style="left:779.4px;top:393.6px" width="4.2" height="2.5" viewBox="0 0 4 2.4"><path d="M0 0H4L2 2.4Z" fill="#111"/></svg>
<div style="left:599px;top:412.9px;width:188px;height:1px;background:#cfcfcf;"></div>
<div style="left:600px;top:401.5px;width:59.4px;height:11.4px;overflow:hidden;"></div>
<div style="left:600px;top:401px;width:59.4px;height:12.4px;overflow:hidden;">
<span class="t" id="t126" style="left:8.80px;top:1.10px;font-size:7.8px;font-weight:normal;color:#111;line-height:10px;transform:scaleX(0.8324);-webkit-text-stroke:.12px #111;">Date Completed</span>
</div>
<div style="left:776.6px;top:401.6px;width:9.8px;height:11.2px;border:1px solid #b9b9b9;border-radius:1px;background:linear-gradient(180deg,#fbfbfb,#dcdcdc);"></div>
<svg style="left:779.4px;top:406.3px" width="4.2" height="2.5" viewBox="0 0 4 2.4"><path d="M0 0H4L2 2.4Z" fill="#111"/></svg>
<div style="left:659.4px;top:297px;width:1px;height:116.6px;background:#c9c9c9;"></div>
<div style="left:598.2px;top:601.2px;width:189.3px;height:15.4px;background:#fff;border-top:1px solid #b3b3b3;"></div>
<div style="left:600.6px;top:601.2px;width:33.6px;height:14.4px;background:#fff;border:1px solid #b3b3b3;border-top:1px solid #fff;"></div>
<span class="t" id="t127" style="left:603.00px;top:604.40px;font-size:7.8px;font-weight:normal;color:#111;line-height:10px;transform:scaleX(0.7880);-webkit-text-stroke:.12px #111;">Filters Bar</span>
<div style="left:634.2px;top:602.2px;width:48.4px;height:13.4px;background:#e9e9e9;border:1px solid #b3b3b3;border-left:none;"></div>
<span class="t" id="t128" style="left:637.00px;top:604.40px;font-size:7.8px;font-weight:normal;color:#111;line-height:10px;transform:scaleX(0.8330);-webkit-text-stroke:.12px #111;">Navigation Bar</span>
<div style="left:465.1px;top:67.3px;width:170.1px;height:289.1px;background:#f0f0f0;border:1px solid #9b9b9b;border-bottom-color:#c4c4c4;"></div>
<span class="t" id="t129" style="left:481.80px;top:69.50px;font-size:7.9px;font-weight:normal;color:#111;line-height:10px;transform:scaleX(0.8983);-webkit-text-stroke:.12px #111;">Create Task</span>
<span class="t" id="t130" style="left:608.20px;top:69.50px;font-size:7.9px;font-weight:normal;color:#111;line-height:10px;transform:scaleX(0.8926);-webkit-text-stroke:.12px #111;">Ins</span>
<span class="t" id="t131" style="left:481.80px;top:83.40px;font-size:7.9px;font-weight:normal;color:#111;line-height:10px;transform:scaleX(0.9192);-webkit-text-stroke:.12px #111;">Edit Task</span>
<span class="t" id="t132" style="left:610.10px;top:83.40px;font-size:7.9px;font-weight:normal;color:#111;line-height:10px;transform:scaleX(0.8136);-webkit-text-stroke:.12px #111;">F4</span>
<span class="t" id="t133" style="left:481.80px;top:97.00px;font-size:7.9px;font-weight:normal;color:#111;line-height:10px;transform:scaleX(0.8987);-webkit-text-stroke:.12px #111;">Delete Task(s)</span>
<span class="t" id="t134" style="left:481.80px;top:110.50px;font-size:7.9px;font-weight:normal;color:#111;line-height:10px;transform:scaleX(0.9263);-webkit-text-stroke:.12px #111;">Duplicate Task</span>
<span class="t" id="t135" style="left:596.20px;top:110.50px;font-size:7.9px;font-weight:normal;color:#111;line-height:10px;transform:scaleX(0.9478);-webkit-text-stroke:.12px #111;">Ctrl+D</span>
<div style="left:468px;top:123px;width:164.4px;height:1px;background:#d9d9d9;"></div>
<div style="left:468px;top:124px;width:164.4px;height:1px;background:#fdfdfd;"></div>
<span class="t" id="t136" style="left:481.80px;top:128.00px;font-size:7.9px;font-weight:normal;color:#111;line-height:10px;transform:scaleX(0.9129);-webkit-text-stroke:.12px #111;">Copy Tasks</span>
<span class="t" id="t137" style="left:596.20px;top:128.00px;font-size:7.9px;font-weight:normal;color:#111;line-height:10px;transform:scaleX(0.9478);-webkit-text-stroke:.12px #111;">Ctrl+C</span>
<span class="t" id="t138" style="left:481.80px;top:141.40px;font-size:7.9px;font-weight:normal;color:#9a9a9a;line-height:10px;transform:scaleX(0.8749);-webkit-text-stroke:.12px #9a9a9a;">Paste Tasks</span>
<span class="t" id="t139" style="left:596.70px;top:141.40px;font-size:7.9px;font-weight:normal;color:#9a9a9a;line-height:10px;transform:scaleX(0.9433);-webkit-text-stroke:.12px #9a9a9a;">Ctrl+V</span>
<div style="left:468px;top:154.2px;width:164.4px;height:1px;background:#d9d9d9;"></div>
<div style="left:468px;top:155.2px;width:164.4px;height:1px;background:#fdfdfd;"></div>
<span class="t" id="t140" style="left:481.80px;top:158.70px;font-size:7.9px;font-weight:normal;color:#111;line-height:10px;transform:scaleX(0.9260);-webkit-text-stroke:.12px #111;">Task Move Up</span>
<span class="t" id="t141" style="left:592.00px;top:158.70px;font-size:7.9px;font-weight:normal;color:#111;line-height:10px;transform:scaleX(0.9492);-webkit-text-stroke:.12px #111;">Ctrl+Up</span>
<span class="t" id="t142" style="left:481.80px;top:172.10px;font-size:7.9px;font-weight:normal;color:#111;line-height:10px;transform:scaleX(0.9288);-webkit-text-stroke:.12px #111;">Task Move Down</span>
<span class="t" id="t143" style="left:582.20px;top:172.10px;font-size:7.9px;font-weight:normal;color:#111;line-height:10px;transform:scaleX(0.9551);-webkit-text-stroke:.12px #111;">Ctrl+Down</span>
<div style="left:468px;top:184.9px;width:164.4px;height:1px;background:#d9d9d9;"></div>
<div style="left:468px;top:185.9px;width:164.4px;height:1px;background:#fdfdfd;"></div>
<span class="t" id="t144" style="left:481.80px;top:189.60px;font-size:7.9px;font-weight:normal;color:#111;line-height:10px;transform:scaleX(0.9050);-webkit-text-stroke:.12px #111;">Increase Priority</span>
<span class="t" id="t145" style="left:571.90px;top:189.60px;font-size:7.9px;font-weight:normal;color:#111;line-height:10px;transform:scaleX(0.9646);-webkit-text-stroke:.12px #111;">Shift+Ctrl+Up</span>
<span class="t" id="t146" style="left:481.80px;top:203.00px;font-size:7.9px;font-weight:normal;color:#111;line-height:10px;transform:scaleX(0.8890);-webkit-text-stroke:.12px #111;">Decrease Priority</span>
<span class="t" id="t147" style="left:562.10px;top:203.00px;font-size:7.9px;font-weight:normal;color:#111;line-height:10px;transform:scaleX(0.9660);-webkit-text-stroke:.12px #111;">Shift+Ctrl+Down</span>
<div style="left:468px;top:215.6px;width:164.4px;height:1px;background:#d9d9d9;"></div>
<div style="left:468px;top:216.6px;width:164.4px;height:1px;background:#fdfdfd;"></div>
<span class="t" id="t148" style="left:470.70px;top:220.30px;font-size:7.9px;font-weight:normal;color:#9a9a9a;line-height:10px;transform:scaleX(0.8584);-webkit-text-stroke:.12px #9a9a9a;">Filter Presets</span>
<div style="left:513.9px;top:218.4px;width:118.6px;height:13.2px;background:#a9cbf0;border:1px solid #c9d3e3;"></div>
<span class="t" id="t149" style="left:516.70px;top:220.30px;font-size:7.9px;font-weight:normal;color:#6c7a92;line-height:10px;transform:scaleX(0.9232);-webkit-text-stroke:.12px #6c7a92;">Custom</span>
<div style="left:627.8px;top:219.6px;width:4px;height:10.8px;border:.7px solid #999;border-radius:1px;background:#fff;"></div>
<div style="left:468px;top:233px;width:164.4px;height:1px;background:#d9d9d9;"></div>
<div style="left:468px;top:234px;width:164.4px;height:1px;background:#fdfdfd;"></div>
<div style="left:480.4px;top:235.8px;width:152px;height:12.8px;background:#3399ff;"></div>
<span class="t" id="t150" style="left:482.40px;top:237.70px;font-size:7.9px;font-weight:normal;color:#fff;line-height:10px;transform:scaleX(0.8836);-webkit-text-stroke:.12px #fff;">Paste New Task(s)</span>
<svg style="left:467.4px;top:236.6px" width="11.6" height="11" viewBox="0 0 11.6 11"><rect x=".4" y=".6" width="3.6" height="3" fill="#fff" stroke="#444" stroke-width=".6"/><rect x=".4" y="7" width="3.6" height="3" fill="#fff" stroke="#444" stroke-width=".6"/><path d="M4 2 H6 V8.6 H4 M6 5.2 H11" fill="none" stroke="#333" stroke-width=".9"/><path d="M6.4 5.2 H9" stroke="#2a9a3a" stroke-width="1.6"/></svg>
<div style="left:468px;top:250.4px;width:164.4px;height:1px;background:#d9d9d9;"></div>
<div style="left:468px;top:251.4px;width:164.4px;height:1px;background:#fdfdfd;"></div>
<span class="t" id="t151" style="left:481.80px;top:255.10px;font-size:7.9px;font-weight:normal;color:#111;line-height:10px;transform:scaleX(0.8984);-webkit-text-stroke:.12px #111;">Change Status</span>
<span class="t" id="t152" style="left:481.80px;top:268.50px;font-size:7.9px;font-weight:normal;color:#111;line-height:10px;transform:scaleX(0.9150);-webkit-text-stroke:.12px #111;">Change Category</span>
<svg style="left:626.6px;top:257.40000000000003px" width="2.6" height="4.4" viewBox="0 0 2.6 4.4"><path d="M0 0 L2.6 2.2 L0 4.4Z" fill="#111"/></svg>
<svg style="left:626.6px;top:270.8px" width="2.6" height="4.4" viewBox="0 0 2.6 4.4"><path d="M0 0 L2.6 2.2 L0 4.4Z" fill="#111"/></svg>
<svg style="left:626.6px;top:301.8px" width="2.6" height="4.4" viewBox="0 0 2.6 4.4"><path d="M0 0 L2.6 2.2 L0 4.4Z" fill="#111"/></svg>
<span class="t" id="t153" style="left:470.70px;top:281.70px;font-size:7.9px;font-weight:normal;color:#111;line-height:10px;transform:scaleX(0.8795);-webkit-text-stroke:.12px #111;">Set Due Date for selected tasks</span>
<div style="left:572px;top:280.2px;width:60.4px;height:12.8px;background:#fff;border:1px solid #c3c7d6;"></div>
<span class="t" id="t154" style="left:574.40px;top:281.90px;font-size:7.9px;font-weight:normal;color:#111;line-height:10px;transform:scaleX(0.8850);-webkit-text-stroke:.12px #111;">Sun 04/09/2011</span>
<div style="left:627.8px;top:281.4px;width:4px;height:10.6px;border:.7px solid #777;border-radius:1px;background:#fff;"></div>
<svg style="left:628.5px;top:286px" width="2.6" height="1.7" viewBox="0 0 4 2.4"><path d="M0 0H4L2 2.4Z" fill="#111"/></svg>
<div style="left:468px;top:295.3px;width:164.4px;height:1px;background:#d9d9d9;"></div>
<div style="left:468px;top:296.3px;width:164.4px;height:1px;background:#fdfdfd;"></div>
<span class="t" id="t155" style="left:481.80px;top:299.50px;font-size:7.9px;font-weight:normal;color:#111;line-height:10px;transform:scaleX(0.8811);-webkit-text-stroke:.12px #111;">Export</span>
<div style="left:468px;top:312px;width:164.4px;height:1px;background:#d9d9d9;"></div>
<div style="left:468px;top:313px;width:164.4px;height:1px;background:#fdfdfd;"></div>
<span class="t" id="t156" style="left:481.80px;top:316.80px;font-size:7.9px;font-weight:normal;color:#111;line-height:10px;transform:scaleX(0.8897);-webkit-text-stroke:.12px #111;">Always Expand</span>
<span class="t" id="t157" style="left:481.80px;top:330.10px;font-size:7.9px;font-weight:normal;color:#111;line-height:10px;transform:scaleX(0.9143);-webkit-text-stroke:.12px #111;">Expand All</span>
<span class="t" id="t158" style="left:583.00px;top:330.10px;font-size:7.9px;font-weight:normal;color:#111;line-height:10px;transform:scaleX(0.9619);-webkit-text-stroke:.12px #111;">Ctrl+Alt+E</span>
<span class="t" id="t159" style="left:481.80px;top:343.10px;font-size:7.9px;font-weight:normal;color:#111;line-height:10px;transform:scaleX(0.9337);-webkit-text-stroke:.12px #111;">Collapse All</span>
<span class="t" id="t160" style="left:582.20px;top:343.10px;font-size:7.9px;font-weight:normal;color:#111;line-height:10px;transform:scaleX(0.9724);-webkit-text-stroke:.12px #111;">Ctrl+Alt+C</span>
<svg style="left:468px;top:68.8px" width="11" height="11" viewBox="0 0 11 11"><path d="M4.4 .4 H8.4 L10.2 2.2 V9.8 H4.4Z" fill="#f3f8ff" stroke="#9db1d0" stroke-width=".6"/><rect x=".4" y=".9" width="4.9" height="3.9" fill="#f7e676" stroke="#dccb58" stroke-width=".5"/><path d="M1.5 6.9 H4 M2.75 6.9 V9.7" stroke="#2a3a66" stroke-width=".9"/><circle cx="8.1" cy="8" r="2.2" fill="#fff" stroke="#d9443c" stroke-width=".9"/><path d="M8.1 6.9 V8 H9" stroke="#d9443c" stroke-width=".5" fill="none"/></svg>
<svg style="left:468.4px;top:82.4px" width="10.6" height="11" viewBox="0 0 10.6 11"><rect x=".5" y="1.2" width="8" height="9.2" fill="#fbfdff" stroke="#9db1d0" stroke-width=".6"/><path d="M2.4 9 L3.4 6.2 L8.4 .9 L9.9 2.3 L4.9 7.8Z" fill="#8e9cb5" stroke="#4a5670" stroke-width=".45"/><path d="M8.2 1.1 L9.7 2.5" stroke="#ea962c" stroke-width="1.6"/><path d="M2.4 9 L3 7.4 L3.9 8.3Z" fill="#333"/></svg>
<svg style="left:467.8px;top:95.8px" width="11.4" height="11.4" viewBox="0 0 11.4 11.4"><path d="M4.6 4.9 H10.8 L10 10.9 H5.4Z" fill="#bfdcf4" stroke="#86b3dc" stroke-width=".55"/><path d="M5 5.6 H10.4" stroke="#e9f4fd" stroke-width=".8"/><path d="M.6 2.8 C1 1 2.6 .6 3.6 1.8 L4.4 1.2 L4.2 3.4 L2.2 3.2 L3 2.5 C2.4 1.8 1.6 2 1.3 3Z" fill="#8fa4c6"/><path d="M5 1.2 L7.4 1 L7.2 .2 L10 2.6 L7.6 4.6 L7.6 3.4 L5.4 3.6Z" fill="#3fae45" stroke="#2a8a32" stroke-width=".3"/></svg>
<svg style="left:468.6px;top:127px;opacity:1" width="10" height="11" viewBox="0 0 10 11"><path d="M.6 .6 H4.6 L6 2 V7.6 H.6Z" fill="#fff" stroke="#9fb4d4" stroke-width=".6"/><path d="M3.6 3.2 H7.6 L9.2 4.8 V10.4 H3.6Z" fill="#f2f7ff" stroke="#8aa6cf" stroke-width=".6"/></svg>
<svg style="left:468.6px;top:140.4px;opacity:0.45" width="10" height="11" viewBox="0 0 10 11"><path d="M.6 .6 H4.6 L6 2 V7.6 H.6Z" fill="#fff" stroke="#9fb4d4" stroke-width=".6"/><path d="M3.6 3.2 H7.6 L9.2 4.8 V10.4 H3.6Z" fill="#f2f7ff" stroke="#8aa6cf" stroke-width=".6"/></svg>
<svg style="left:467.9px;top:158.2px" width="10.2" height="10.2" viewBox="0 0 9.2 9.2"><defs><linearGradient id="bgu4679" x1="0" y1="0" x2="0" y2="1"><stop offset="0" stop-color="#7cbef5"/><stop offset="1" stop-color="#2a78d6"/></linearGradient></defs><rect x=".4" y=".4" width="8.4" height="8.4" rx="1.3" fill="url(#bgu4679)" stroke="#4a86d0" stroke-width=".6"/><path d="M2.3 5.6 L4.6 3.2 L6.9 5.6" fill="none" stroke="#fff" stroke-width="1.5"/></svg>
<svg style="left:467.9px;top:171.6px" width="10.2" height="10.2" viewBox="0 0 9.2 9.2"><defs><linearGradient id="bgd4679" x1="0" y1="0" x2="0" y2="1"><stop offset="0" stop-color="#7cbef5"/><stop offset="1" stop-color="#2a78d6"/></linearGradient></defs><rect x=".4" y=".4" width="8.4" height="8.4" rx="1.3" fill="url(#bgd4679)" stroke="#4a86d0" stroke-width=".6"/><path d="M2.3 3.4 L4.6 5.8 L6.9 3.4" fill="none" stroke="#fff" stroke-width="1.5"/></svg>
<svg style="left:467.9px;top:189.1px" width="10.2" height="10.2" viewBox="0 0 9.2 9.2"><defs><linearGradient id="bguu4679" x1="0" y1="0" x2="0" y2="1"><stop offset="0" stop-color="#7cbef5"/><stop offset="1" stop-color="#2a78d6"/></linearGradient></defs><rect x=".4" y=".4" width="8.4" height="8.4" rx="1.3" fill="url(#bguu4679)" stroke="#4a86d0" stroke-width=".6"/><path d="M2.6 4.3 L4.6 2.4 L6.6 4.3 M2.6 6.8 L4.6 4.9 L6.6 6.8" fill="none" stroke="#fff" stroke-width="1.1"/></svg>
<svg style="left:467.9px;top:202.5px" width="10.2" height="10.2" viewBox="0 0 9.2 9.2"><defs><linearGradient id="bgdd4679" x1="0" y1="0" x2="0" y2="1"><stop offset="0" stop-color="#7cbef5"/><stop offset="1" stop-color="#2a78d6"/></linearGradient></defs><rect x=".4" y=".4" width="8.4" height="8.4" rx="1.3" fill="url(#bgdd4679)" stroke="#4a86d0" stroke-width=".6"/><path d="M2.6 2.4 L4.6 4.3 L6.6 2.4 M2.6 4.9 L4.6 6.8 L6.6 4.9" fill="none" stroke="#fff" stroke-width="1.1"/></svg>
</div>
</body></html>
